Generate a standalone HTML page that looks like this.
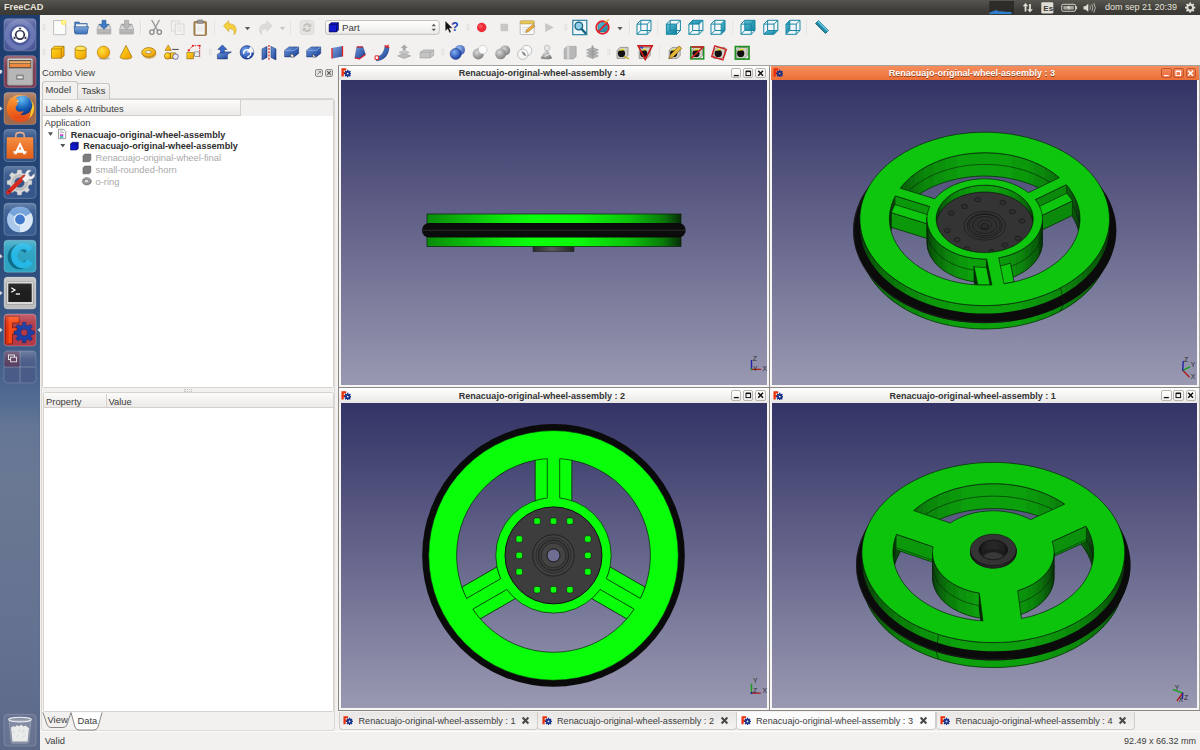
<!DOCTYPE html>
<html><head><meta charset="utf-8"><title>FreeCAD</title>
<style>
*{box-sizing:border-box;margin:0;padding:0}
html,body{width:1200px;height:750px;overflow:hidden;background:#f2f1f0;font-family:"Liberation Sans",sans-serif;font-size:11px;color:#3c3c3c}
.abs{position:absolute}
#top{left:0;top:0;width:1200px;height:14.8px;z-index:5;background:linear-gradient(#57554f,#403f3a 60%,#3a3935);color:#dfdbd2;}
#top .t{position:absolute;left:4px;top:0;font-weight:bold;font-size:9.200px;line-height:14.500px;color:#e8e4dc}
#launcher{left:0;top:14px;width:40px;height:736px;background:linear-gradient(#35527f 0%,#3f5a86 30%,#536a8f 50%,#6a7b99 70%,#67768f 100%);border-right:1px solid #2b4570}
.tile{position:absolute;left:5px;width:32px;height:32px;border-radius:4px;border:1px solid rgba(255,255,255,.25)}
#app{left:40px;top:14px;width:1160px;height:736px;background:#f2f1f0}
.txt{position:absolute;white-space:nowrap;line-height:14px}
.vp{position:absolute;background:linear-gradient(#333366,#9999b2)}
.sw{position:absolute;border:1px solid #8d8a86;background:#fbfbfa}
.tb{position:absolute;left:1px;right:1px;top:1px;height:14px;background:linear-gradient(#ffffff,#e9e8e6)}
.tb.act{background:linear-gradient(#f58d5c,#ec6f36)}
.tb .ttl{position:absolute;left:0;right:0;top:0;text-align:center;font-weight:bold;font-size:11px;line-height:14px;color:#3c3c3c}
.tb.act .ttl{color:#fff;text-shadow:0 1px 0 rgba(0,0,0,.35)}

.t9{font-size:9.4px}
.b9{font-size:9.1px;font-weight:bold;color:#2e2e2e}
.gry{color:#a9a9a9}
#dock{left:41px;top:98px;width:293.5px;height:633px;border:1px solid #dcd9d5;border-radius:3px;background:#f2f1f0}
.tab{position:absolute;border:1px solid #c9c6c2;border-bottom:none;border-radius:3px 3px 0 0;background:linear-gradient(#f6f5f4,#e6e4e1)}
.tab.sel{background:#f2f1f0}
.white{position:absolute;background:#fff;border:1px solid #d6d3cf;border-radius:1.5px}
.hdr{position:absolute;background:linear-gradient(#fbfbfa,#eceae8);border-bottom:1px solid #d3d0cc}

#mdi{left:338px;top:65px;width:862px;height:646px;background:#f7f6f5}
.ln{position:absolute;background:#8a8885}
.wb{position:absolute;width:10.5px;height:10.5px;border:1px solid #b9b6b2;border-radius:2px;background:linear-gradient(#fff,#f1f0ee)}
.act .wb{border-color:#c2562a;background:linear-gradient(#f4885a,#e96a38)}
.mtab{position:absolute;top:712px;height:17.5px;width:199.5px;border:1px solid #d0cdc9;border-top:none;border-radius:0 0 4px 4px;background:linear-gradient(#e9e7e5,#f4f3f2)}
.mtab.sel{background:#fbfbfb}
.mtab .x{position:absolute;left:181.5px;top:4px}
</style></head><body>
<div id="top" class="abs"><span class="t">FreeCAD</span><svg class="abs" style="left:980px;top:0" width="220" height="15" viewBox="980 0 220 15"><rect x="989.300" y="1" width="24.700" height="13" fill="#2d2c29"/><path d="M989.300 14v-1.500l2-.5l1.500-1l1 .8l1.500-2.300l1 1.500l1.200-1l1 1.800l1.500-.8l1 .5l2-.3l1.500.6l2 .2l2.500-.3l2.500.5v1.800z" fill="#2d7fd0"/><path d="M1025.500 3l2.800 3.300h-1.900v5.200h-1.800v-5.200h-1.900zM1030 12.500l-2.800-3.300h1.900v-5.200h1.800v5.200h1.900z" fill="#e0ddd6"/><rect x="1041.300" y="2.300" width="12" height="11.200" rx="1.200" fill="#e0ddd6"/><text x="1043.300" y="11" font-family="Liberation Sans,sans-serif" font-size="8" font-weight="bold" fill="#3c3b37">Es</text><rect x="1061.700" y="4.300" width="13.800" height="7" rx="1.500" fill="none" stroke="#cfccc5" stroke-width="1"/><rect x="1075.800" y="6.300" width="1.300" height="3" fill="#cfccc5"/><rect x="1063.400" y="6" width="10.400" height="3.600" fill="#a5a29c"/><path d="M1069.500 5.300l-2.300 2.800h1.800l-1 2.400l2.600-3h-1.800z" fill="#f2efe8"/><path d="M1083.500 6.200h2l2.800-2.600v8.400l-2.800-2.600h-2z" fill="#e0ddd6"/><path d="M1089.800 5.500q1.300 2.300 0 4.600M1091.800 4.200q2.200 3.600 0 7.200M1093.800 3q3 4.800 0 9.600" fill="none" stroke="#cfccc5" stroke-width=".8"/><path d="M1195.34 6.79L1195.34 8.41L1193.98 8.57L1193.56 9.59L1194.41 10.66L1193.26 11.81L1192.19 10.96L1191.17 11.38L1191.01 12.74L1189.39 12.74L1189.23 11.38L1188.21 10.96L1187.14 11.81L1185.99 10.66L1186.84 9.59L1186.42 8.57L1185.06 8.41L1185.06 6.79L1186.42 6.63L1186.84 5.61L1185.99 4.54L1187.14 3.39L1188.21 4.24L1189.23 3.82L1189.39 2.46L1191.01 2.46L1191.17 3.82L1192.19 4.24L1193.26 3.39L1194.41 4.54L1193.56 5.61L1193.98 6.63zM1192.10 7.60a1.9 1.9 0 1 0 -3.8 0a1.9 1.9 0 1 0 3.8 0z" fill="#e0ddd6" fill-rule="evenodd"/></svg><span class="abs" style="left:1105px;top:0;font-size:9.000px;line-height:15px;color:#e6e2da;white-space:nowrap">dom sep 21 20:39</span></div>
<svg class="abs" style="left:0;top:14px" width="41" height="736" viewBox="0 14 41 736"><defs><linearGradient id="lbg" x1="0" x2="0" y1="0" y2="1"><stop offset="0" stop-color="#1d3d70"/><stop offset=".16" stop-color="#224274"/><stop offset=".32" stop-color="#2a4a79"/><stop offset=".44" stop-color="#3b5985"/><stop offset=".52" stop-color="#506a91"/><stop offset=".56" stop-color="#647695"/><stop offset=".64" stop-color="#6a7893"/><stop offset=".85" stop-color="#647190"/><stop offset="1" stop-color="#5b6887"/></linearGradient><linearGradient id="tg" x1="0" x2="0" y1="0" y2="1"><stop offset="0" stop-color="#fff" stop-opacity=".22"/><stop offset=".5" stop-color="#fff" stop-opacity=".05"/><stop offset="1" stop-color="#fff" stop-opacity="0"/></linearGradient><radialGradient id="ffg" cx=".45" cy=".2" r=".85"><stop offset="0" stop-color="#58b8f4"/><stop offset=".55" stop-color="#1560b8"/><stop offset="1" stop-color="#0a2a78"/></radialGradient><linearGradient id="fxo" x1="0" x2="0" y1="0" y2="1"><stop offset="0" stop-color="#f59a30"/><stop offset=".6" stop-color="#f0701c"/><stop offset="1" stop-color="#e2481a"/></linearGradient><linearGradient id="og" x1="0" x2="0" y1="0" y2="1"><stop offset="0" stop-color="#f58a3c"/><stop offset="1" stop-color="#e0601a"/></linearGradient></defs><rect x="0" y="14" width="40.3" height="736" fill="url(#lbg)"/><rect x="39.6" y="14" width="1" height="736" fill="#4f6b99" opacity=".8"/><rect x="4" y="18.8" width="32" height="32" rx="3.5" fill="#4c5a9c" stroke="rgba(255,255,255,.28)" stroke-width=".8"/><circle cx="20" cy="34.8" r="13" fill="none" stroke="#8f9bd0" stroke-width="5" opacity=".45"/><circle cx="20" cy="34.8" r="8.2" fill="#fff"/><circle cx="20" cy="34.8" r="4.3" fill="none" stroke="#2b2b4a" stroke-width="1.7"/><circle cx="20.0" cy="28.6" r="1.35" fill="#2b2b4a" stroke="#fff" stroke-width=".5"/><circle cx="14.6" cy="37.9" r="1.35" fill="#2b2b4a" stroke="#fff" stroke-width=".5"/><circle cx="25.4" cy="37.9" r="1.35" fill="#2b2b4a" stroke="#fff" stroke-width=".5"/><rect x="4" y="55.7" width="32" height="32" rx="3.5" fill="#7e3a50" stroke="rgba(255,255,255,.28)" stroke-width=".8"/><rect x="7.300" y="58.300" width="25.500" height="27" rx="1.800" fill="#c6c6c6" stroke="#777" stroke-width=".6"/><rect x="8.800" y="60" width="22.500" height="8.500" fill="#4a3c36"/><rect x="9.500" y="61.200" width="21" height="2.200" fill="#f3a556"/><rect x="9.500" y="64" width="21" height="3.200" fill="#e8853a"/><rect x="7.800" y="68.500" width="24.500" height="16.500" rx="1" fill="#b6b6b6" stroke="#8a8a8a" stroke-width=".5"/><rect x="16" y="74.500" width="8" height="5.500" rx="1" fill="#8a8a8a"/><rect x="17.500" y="76.300" width="5" height="1.900" fill="#ececec"/><rect x="4" y="92.6" width="32" height="32" rx="3.5" fill="#a0694a" stroke="rgba(255,255,255,.28)" stroke-width=".8"/><circle cx="20.3" cy="108.4" r="13.6" fill="url(#fxo)"/><path d="M30.500 99.500a13.600 13.600 0 0 1 2.800 13q-1.500 4-4.500 6q3-5 2-10.500q-.8-4.500-3.300-7z" fill="#fbd02c"/><circle cx="22.400" cy="105.300" r="9.900" fill="url(#ffg)"/><path d="M9.500 99q1.500-1.500 3-1q1.500-2 4-2.500q-1 1.500-.500 3q1.500.500 3 2.200l-2.500 1.200l1.800 1.800q-2 1.200-2.600 3.200q-.700 2.400 1.500 4q2.500 1.600 6.500 0q-.500 2.500-3.500 3.500q5 2 9-1.500q-3 6-10 5.500q-7-.500-10-7q-2.500-6 .300-12.400z" fill="url(#fxo)"/><path d="M16.500 102.500l2.500-1.200l-1.400-.9z" fill="#fff0e0"/><rect x="4" y="129.5" width="32" height="32" rx="3.5" fill="#2f5288" stroke="rgba(255,255,255,.28)" stroke-width=".8"/><path d="M15.800 138v-2.800q0-2.700 4.200-2.700t4.200 2.700v2.800" fill="none" stroke="#f3a67a" stroke-width="1.400"/><path d="M6.800 137.300h26.400l.3 21.400h-27z" fill="url(#og)"/><path d="M20 142l6 12.300h-2.700l-1.100-2.500h-4.400l-1.100 2.500h-2.700zM20 146.200l-1.300 3.400h2.600zM13.300 151.300h13.400v1.500h-13.400z" fill="#fff"/><rect x="4" y="166.4" width="32" height="32" rx="3.5" fill="#35578c" stroke="rgba(255,255,255,.28)" stroke-width=".8"/><path d="M31.94 180.53L31.94 184.47L28.99 184.94L27.94 187.49L29.69 189.91L26.91 192.69L24.49 190.94L21.94 191.99L21.47 194.94L17.53 194.94L17.06 191.99L14.51 190.94L12.09 192.69L9.31 189.91L11.06 187.49L10.01 184.94L7.06 184.47L7.06 180.53L10.01 180.06L11.06 177.51L9.31 175.09L12.09 172.31L14.51 174.06L17.06 173.01L17.53 170.06L21.47 170.06L21.94 173.01L24.49 174.06L26.91 172.31L29.69 175.09L27.94 177.51L28.99 180.06zM24.70 182.50a5.2 5.2 0 1 0 -10.4 0a5.2 5.2 0 1 0 10.4 0z" fill="#d9d9d9" fill-rule="evenodd" stroke="#aaa" stroke-width=".4"/><circle cx="19.500" cy="182.500" r="7.200" fill="none" stroke="#bcbcbc" stroke-width="2.200"/><path d="M8 192.500l16-15.500" stroke="#d62a20" stroke-width="4.200" stroke-linecap="round"/><path d="M23.500 177.500l3.500-3.300a4.300 4.300 0 0 1 5.700-5.300l-3 2.900l.6 2.600l2.600.5l2.900-3a4.300 4.300 0 0 1-5.400 5.800l-3.300 3.400z" fill="#f2f2f2" stroke="#bbb" stroke-width=".4" transform="translate(-1.500 1.500)"/><circle cx="9.300" cy="191.300" r=".9" fill="#7a1010"/><rect x="4" y="203.3" width="32" height="32" rx="3.5" fill="#3a5d92" stroke="rgba(255,255,255,.28)" stroke-width=".8"/><circle cx="20" cy="219.500" r="12.800" fill="#8fb6e4"/><path d="M20 219.500L8.900 213.100A12.800 12.800 0 0 1 31.100 213.100z" fill="#6f9fd8"/><path d="M20 219.500L31.100 213.100A12.800 12.800 0 0 1 20 232.300z" fill="#dbe8f7"/><path d="M20 219.500L20 232.300A12.800 12.800 0 0 1 8.900 213.100z" fill="#a9c8ec"/><circle cx="20" cy="219.500" r="6.300" fill="#e8f0fa"/><circle cx="20" cy="219.500" r="4.900" fill="#3f78cc"/><rect x="4" y="240.2" width="32" height="32" rx="3.5" fill="#2fa3c2" stroke="rgba(255,255,255,.28)" stroke-width=".8"/><path d="M31.500 248.500a12 12.500 0 1 0 0 15.500l-4.500-4a6 6.500 0 1 1 0-7.500z" fill="#0e6f8c" transform="translate(-2.500 0.600)"/><path d="M32.500 248a12 12.500 0 1 0 0 15.500l-4.500-4a6 6.500 0 1 1 0-7.500z" fill="#25b8e6"/><rect x="4" y="277.1" width="32" height="32" rx="3.5" fill="#bdbdbd" stroke="rgba(255,255,255,.28)" stroke-width=".8"/><rect x="6.500" y="281.500" width="27" height="23" rx="1.500" fill="#d9d9d9" stroke="#8e8e8e" stroke-width=".6"/><rect x="8.300" y="283.500" width="23.400" height="18.500" fill="#1e1e1e"/><path d="M11.300 287.800l3.600 2.200l-3.600 2.200" fill="none" stroke="#fff" stroke-width="1.300"/><path d="M15.800 294h4.200" stroke="#fff" stroke-width="1.300"/><rect x="4" y="314.0" width="32" height="32" rx="3.5" fill="#b23a48" stroke="rgba(255,255,255,.28)" stroke-width=".8"/><path d="M5.600 316.300h13.600v6.600h-6.800v4.800h4.800v6.200h-4.800v10h-6.800z" fill="#ff4a14" stroke="#6a1208" stroke-width=".7"/><path d="M6 316.700h2.600v26.800h-2.600z" fill="#d82808" opacity=".7"/><path d="M34.37 330.99L34.37 334.21L31.56 334.49L30.74 336.47L32.53 338.65L30.25 340.93L28.07 339.14L26.09 339.96L25.81 342.77L22.59 342.77L22.31 339.96L20.33 339.14L18.15 340.93L15.87 338.65L17.66 336.47L16.84 334.49L14.03 334.21L14.03 330.99L16.84 330.71L17.66 328.73L15.87 326.55L18.15 324.27L20.33 326.06L22.31 325.24L22.59 322.43L25.81 322.43L26.09 325.24L28.07 326.06L30.25 324.27L32.53 326.55L30.74 328.73L31.56 330.71zM27.70 332.60a3.5 3.5 0 1 0 -7.0 0a3.5 3.5 0 1 0 7.0 0z" fill="#1c3fa8" fill-rule="evenodd" stroke="#0e2266" stroke-width=".5"/><rect x="4" y="350.9" width="32" height="32" rx="3.5" fill="#4a5a86" stroke="rgba(255,255,255,.28)" stroke-width=".8" opacity=".75"/><rect x="4.500" y="351.400" width="15.500" height="15.500" rx="2" fill="#5b3a5c" opacity=".85"/><path d="M20 351.500v31M4.500 367h31" stroke="rgba(255,255,255,.35)" stroke-width=".7"/><rect x="8.500" y="355" width="6" height="4.600" fill="none" stroke="#e8e8e8" stroke-width=".9"/><rect x="10.600" y="357.200" width="6" height="4.600" fill="#5b3a5c" stroke="#e8e8e8" stroke-width=".9"/><rect x="4" y="18.8" width="32" height="16" rx="3.500" fill="url(#tg)"/><rect x="4" y="55.7" width="32" height="16" rx="3.500" fill="url(#tg)"/><rect x="4" y="92.6" width="32" height="16" rx="3.500" fill="url(#tg)"/><rect x="4" y="129.5" width="32" height="16" rx="3.500" fill="url(#tg)"/><rect x="4" y="166.4" width="32" height="16" rx="3.500" fill="url(#tg)"/><rect x="4" y="203.3" width="32" height="16" rx="3.500" fill="url(#tg)"/><rect x="4" y="240.2" width="32" height="16" rx="3.500" fill="url(#tg)"/><rect x="4" y="277.1" width="32" height="16" rx="3.500" fill="url(#tg)"/><rect x="4" y="314.0" width="32" height="16" rx="3.500" fill="url(#tg)"/><rect x="4" y="350.9" width="32" height="16" rx="3.500" fill="url(#tg)"/><path d="M0 69.5l2.600 2.200l-2.600 2.200z" fill="#e8e8e8" opacity=".9"/><path d="M0 106.39999999999999l2.600 2.200l-2.600 2.200z" fill="#e8e8e8" opacity=".9"/><path d="M0 254.0l2.600 2.200l-2.600 2.200z" fill="#e8e8e8" opacity=".9"/><path d="M0 290.90000000000003l2.600 2.200l-2.600 2.200z" fill="#e8e8e8" opacity=".9"/><path d="M0 327.8l2.600 2.200l-2.600 2.200z" fill="#e8e8e8" opacity=".9"/><path d="M40 327.8l-2.600 2.200l2.600 2.200z" fill="#e8e8e8" opacity=".9"/><path d="M0 70.500h1.800M0 72.800h1.800" stroke="#e8e8e8" stroke-width=".9"/><rect x="4" y="714.300" width="32" height="31.700" rx="3.500" fill="#fff" fill-opacity=".07" stroke="rgba(255,255,255,.22)" stroke-width=".8"/><path d="M9 720.500h22l-2.300 21.500q-.2 1.200-1.500 1.200h-14.400q-1.300 0-1.500-1.200z" fill="#c4c9d4" fill-opacity=".28" stroke="#d8dbe2" stroke-opacity=".5" stroke-width=".6"/><path d="M11 727.500l2.500-1.500l1.500 1l2-2l2 1.500l2-2l2.500 2l2-1l2.500 2l1 .5l-1.500 13.500h-15z" fill="#f2f2f0" fill-opacity=".92"/><path d="M13 731l2 2M19 729l1 3M24 730l-1.500 3M16 737l2.500-2M23 737l2-1.500" stroke="#c9c9c6" stroke-width=".7"/><ellipse cx="20" cy="719.600" rx="11.300" ry="2.300" fill="#aeb4c0" fill-opacity=".55" stroke="#eceef2" stroke-width="1.100"/></svg>
<div id="app" class="abs"></div><!--TB--><svg class="abs" style="left:40px;top:14px" width="1160" height="51" viewBox="40 14 1160 51"><defs><linearGradient id="yl" x1="0" x2="1" y1="0" y2="1"><stop offset="0" stop-color="#ffdc20"/><stop offset="1" stop-color="#ee9c00"/></linearGradient><radialGradient id="ys" cx=".38" cy=".35" r=".7"><stop offset="0" stop-color="#ffe23c"/><stop offset="1" stop-color="#ee9a00"/></radialGradient><linearGradient id="bl" x1="0" x2="1" y1="0" y2="1"><stop offset="0" stop-color="#6f9be0"/><stop offset="1" stop-color="#163a90"/></linearGradient><radialGradient id="bs" cx=".38" cy=".35" r=".7"><stop offset="0" stop-color="#7fb0f5"/><stop offset="1" stop-color="#10339a"/></radialGradient><radialGradient id="gs" cx=".38" cy=".35" r=".7"><stop offset="0" stop-color="#d8d8d8"/><stop offset="1" stop-color="#7c7c7c"/></radialGradient><linearGradient id="tl" x1="0" x2="1" y1="0" y2="1"><stop offset="0" stop-color="#5cc0d8"/><stop offset="1" stop-color="#0f7f9c"/></linearGradient><linearGradient id="fd" x1="0" x2="0" y1="0" y2="1"><stop offset="0" stop-color="#7da7dc"/><stop offset="1" stop-color="#3b6fb8"/></linearGradient><linearGradient id="cb" x1="0" x2="0" y1="0" y2="1"><stop offset="0" stop-color="#ffffff"/><stop offset="1" stop-color="#ecebe9"/></linearGradient></defs><path d="M43.2 23.9v7.2M44.800000000000004 23.9v7.2" stroke="#c4c1bc" stroke-width=".7" stroke-dasharray=".8 1"/><path d="M53.6 20.5h9.5l2.6 2.6v11.6h-12.1z" fill="#fbfbfb" stroke="#a8a8a8" stroke-width=".7"/><circle cx="63.699999999999996" cy="22.3" r="2.6" fill="#ffe94a" opacity=".95"/><circle cx="63.699999999999996" cy="22.3" r="1.2" fill="#fffbd0"/><path d="M74.7 22.0h4.5l1.2 1.5h6.8v9.5h-12.5z" fill="#4f7fbf" stroke="#2c558f" stroke-width=".6"/><path d="M76.0 24.3h10.5v5h-10.500z" fill="#f4f4f4"/><path d="M73.9 26.7h14.600l-1.500 7.400h-11.700z" fill="url(#fd)" stroke="#2c558f" stroke-width=".6"/><path d="M97.2 28.7l1.500-4.500h10.600l1.500 4.500v5.300h-13.600z" fill="#d6d6d6" stroke="#8a8a8a" stroke-width=".6"/><rect x="98.2" y="29.5" width="11.6" height="3.6" rx=".6" fill="#b8b8b8" stroke="#8c8c8c" stroke-width=".4"/><path d="M102 20.3h4v4.300h2.800l-4.800 4.600l-4.800-4.600h2.800z" fill="#3f7cc6" stroke="#1d4f92" stroke-width=".5"/><path d="M119.8 28.7l1.500-4.500h10.600l1.500 4.500v5.300h-13.600z" fill="#d6d6d6" stroke="#8a8a8a" stroke-width=".6"/><rect x="120.8" y="29.5" width="11.6" height="3.6" rx=".6" fill="#b8b8b8" stroke="#8c8c8c" stroke-width=".4"/><path d="M124.6 20.3h4v4.300h2.800l-4.800 4.600l-4.800-4.600h2.800z" fill="#b9b9b9" stroke="#8a8a8a" stroke-width=".5"/><path d="M140.5 20.5v14" stroke="#d6d3cf" stroke-width=".8"/><path d="M141.3 20.5v14" stroke="#fbfbfa" stroke-width=".8"/><path d="M152.0 20.5l5.600 10M159.2 20.5l-5.600 10" stroke="#9a9a9a" stroke-width="1.500" stroke-linecap="round"/><circle cx="151.9" cy="32.1" r="2.200" fill="none" stroke="#8a8a8a" stroke-width="1.300"/><circle cx="159.29999999999998" cy="32.1" r="2.200" fill="none" stroke="#8a8a8a" stroke-width="1.300"/><rect x="171.2" y="21.0" width="8.500" height="10" fill="#f0efed" stroke="#d2d0cc" stroke-width=".7"/><rect x="175.2" y="24.0" width="8.800" height="10.500" fill="#f3f2f0" stroke="#cfcdc9" stroke-width=".7"/><path d="M176.7 27.0h5.500M176.7 29.0h5.500M176.7 31.0h5.500" stroke="#dad8d4" stroke-width=".6"/><rect x="193.89999999999998" y="21.5" width="12.600" height="14" rx="1" fill="#b08548" stroke="#7a5a28" stroke-width=".6"/><rect x="195.6" y="23.5" width="9.200" height="11" fill="#f6f6f6" stroke="#c8c8c8" stroke-width=".4"/><rect x="197.39999999999998" y="19.9" width="5.600" height="3.400" rx=".8" fill="#9a9a9a" stroke="#6a6a6a" stroke-width=".5"/><path d="M197.2 26.7h6M197.2 28.7h6M197.2 30.7h6" stroke="#cfcfcf" stroke-width=".5"/><path d="M215 20.5v14" stroke="#d6d3cf" stroke-width=".8"/><path d="M215.8 20.5v14" stroke="#fbfbfa" stroke-width=".8"/><path d="M223.5 25.7l5.200-5v3q7.500 0 7.500 6.500q0 3-2.500 4.500q.8-2 .300-3.500q-1-2.600-5.300-2.600v3z" fill="#f5cf3c" stroke="#c79a10" stroke-width=".5"/><path d="M244.9 27.0h5.2l-2.6 3.2z" fill="#5a5a5a"/><path d="M259.1 25.7l5.200-5v3q7.500 0 7.500 6.500q0 3-2.500 4.500q.8-2 .300-3.500q-1-2.600-5.300-2.600v3z" fill="#dddbd8" stroke="#cbc9c5" stroke-width=".5" transform="translate(531.2 0) scale(-1 1)"/><path d="M279.9 27.0h5.2l-2.6 3.2z" fill="#c8c6c2"/><path d="M291 20.5v14" stroke="#d6d3cf" stroke-width=".8"/><path d="M291.8 20.5v14" stroke="#fbfbfa" stroke-width=".8"/><rect x="300.2" y="20.7" width="13.600" height="13.600" rx="2" fill="#e6e5e2" stroke="#d0ceca" stroke-width=".6"/><path d="M303 27.0a4 4 0 0 1 7-2.500l1.300-1.200v4h-4l1.400-1.400a2.300 2.300 0 0 0-3.900 1.100zM311 28.3a4 4 0 0 1-7 2.500l-1.300 1.200v-4h4l-1.400 1.400a2.300 2.300 0 0 0 3.900-1.100z" fill="#c4c2be"/><rect x="325.500" y="20.500" width="113.700" height="13.800" rx="2.500" fill="url(#cb)" stroke="#b5b2ad" stroke-width=".8"/><path d="M329.200 24.600l1.800-1.900h7.400v7.300l-1.800 1.900h-7.400z" fill="#1018d0" stroke="#04063c" stroke-width=".7"/><path d="M329.200 24.600h7.400v7.300M336.600 24.600l1.800-1.900" stroke="#04063c" stroke-width=".6" fill="none"/><text x="342" y="31" font-family="Liberation Sans,sans-serif" font-size="9.600" fill="#3c3c3c">Part</text><path d="M431.700 26.300l2.100-2.500l2.100 2.500zM431.700 28.700l2.100 2.500l2.100-2.500z" fill="#5a5a5a"/><path d="M445.2 20.7v10.500l2.500-2.300l1.800 4l1.700-.8l-1.800-3.900h3.300z" fill="#111" stroke="#fff" stroke-width=".4"/><text x="451.3" y="31.3" font-family="Liberation Sans,sans-serif" font-weight="bold" font-size="12" fill="#1c3fb0">?</text><path d="M467 23.9v7.2M468.6 23.9v7.2" stroke="#c4c1bc" stroke-width=".7" stroke-dasharray=".8 1"/><circle cx="481.700" cy="27.5" r="4.700" fill="#ee2a36"/><circle cx="480.700" cy="26.3" r="2" fill="#ff6a70" opacity=".6"/><rect x="500.500" y="23.7" width="7.600" height="7.600" rx=".8" fill="#c9c7c3"/><rect x="520.2" y="21.5" width="14" height="13" rx="1" fill="#fafafa" stroke="#9a9a9a" stroke-width=".6"/><rect x="520.2" y="20.7" width="14" height="3.200" rx="1" fill="#e8c860" stroke="#a88a30" stroke-width=".5"/><path d="M522.2 27.5h7M522.2 29.7h6M522.2 31.9h4" stroke="#c8c8c8" stroke-width=".6"/><path d="M525.7 32.5l1-2.800l6.500-5.400l1.700 2l-6.500 5.400z" fill="#f0b040" stroke="#8a5a18" stroke-width=".5"/><path d="M545.200 22.9l8.500 4.600l-8.500 4.600z" fill="#c9c7c3"/><path d="M565 23.9v7.2M566.6 23.9v7.2" stroke="#c4c1bc" stroke-width=".7" stroke-dasharray=".8 1"/><rect x="572.8" y="20.3" width="14" height="14.400" fill="#eef6fa" stroke="#1a7a9a" stroke-width="1.100"/><circle cx="578.8" cy="26.0" r="3.800" fill="#8fd0e8" stroke="#0f5f80" stroke-width="1.300"/><path d="M581.5999999999999 29.0l4 4.200" stroke="#0f5f80" stroke-width="2.200" stroke-linecap="round"/><path d="M598.0 25.0l2.500-2.500h7v7l-2.500 2.500h-7z" fill="url(#tl)" stroke="#0b5f78" stroke-width=".5"/><circle cx="602.5" cy="27.5" r="6.300" fill="none" stroke="#e0202a" stroke-width="1.700"/><path d="M598.1 31.9l8.800-8.800" stroke="#e0202a" stroke-width="1.700"/><path d="M604.5 22.5l4.500-3" stroke="#e8b030" stroke-width="1.300"/><path d="M617.4 27.0h5.2l-2.6 3.2z" fill="#5a5a5a"/><path d="M629.5 20.5v14" stroke="#d6d3cf" stroke-width=".8"/><path d="M630.3 20.5v14" stroke="#fbfbfa" stroke-width=".8"/><path d="M637.0 24.1L647.2 24.1L647.2 34.3L637.0 34.3zM640.8 20.3L651.0 20.3L651.0 30.5L640.8 30.5z" fill="#f4fafc" fill-opacity=".7" stroke="none"/><path d="M637.0 24.1L647.2 24.1L647.2 34.3L637.0 34.3zM640.8 20.3L651.0 20.3L651.0 30.5L640.8 30.5zM637.0 24.1L640.8 20.3M647.2 24.1L651.0 20.3M647.2 34.3L651.0 30.5M637.0 34.3L640.8 30.5" fill="none" stroke="#1787a3" stroke-width="1"/><path d="M658.2 20.5v14" stroke="#d6d3cf" stroke-width=".8"/><path d="M659.0 20.5v14" stroke="#fbfbfa" stroke-width=".8"/><path d="M666.4 24.1L676.6 24.1L676.6 34.3L666.4 34.3zM670.2 20.3L680.4 20.3L680.4 30.5L670.2 30.5z" fill="#f4fafc" fill-opacity=".7" stroke="none"/><path d="M666.4 24.1L676.6 24.1L676.6 34.3L666.4 34.3z" fill="url(#tl)"/><path d="M666.4 24.1L676.6 24.1L676.6 34.3L666.4 34.3zM670.2 20.3L680.4 20.3L680.4 30.5L670.2 30.5zM666.4 24.1L670.2 20.3M676.6 24.1L680.4 20.3M676.6 34.3L680.4 30.5M666.4 34.3L670.2 30.5" fill="none" stroke="#1787a3" stroke-width="1"/><path d="M688.9 24.1L699.1 24.1L699.1 34.3L688.9 34.3zM692.7 20.3L702.9 20.3L702.9 30.5L692.7 30.5z" fill="#f4fafc" fill-opacity=".7" stroke="none"/><path d="M688.9 24.1L699.1 24.1L702.9 20.3L692.7 20.3z" fill="url(#tl)"/><path d="M688.9 24.1L699.1 24.1L699.1 34.3L688.9 34.3zM692.7 20.3L702.9 20.3L702.9 30.5L692.7 30.5zM688.9 24.1L692.7 20.3M699.1 24.1L702.9 20.3M699.1 34.3L702.9 30.5M688.9 34.3L692.7 30.5" fill="none" stroke="#1787a3" stroke-width="1"/><path d="M711.0 24.1L721.2 24.1L721.2 34.3L711.0 34.3zM714.8 20.3L725.0 20.3L725.0 30.5L714.8 30.5z" fill="#f4fafc" fill-opacity=".7" stroke="none"/><path d="M721.2 24.1L725.0 20.3L725.0 30.5L721.2 34.3z" fill="url(#tl)"/><path d="M711.0 24.1L721.2 24.1L721.2 34.3L711.0 34.3zM714.8 20.3L725.0 20.3L725.0 30.5L714.8 30.5zM711.0 24.1L714.8 20.3M721.2 24.1L725.0 20.3M721.2 34.3L725.0 30.5M711.0 34.3L714.8 30.5" fill="none" stroke="#1787a3" stroke-width="1"/><path d="M733.2 20.5v14" stroke="#d6d3cf" stroke-width=".8"/><path d="M734.0 20.5v14" stroke="#fbfbfa" stroke-width=".8"/><path d="M741.0 24.1L751.2 24.1L751.2 34.3L741.0 34.3zM744.8 20.3L755.0 20.3L755.0 30.5L744.8 30.5z" fill="#f4fafc" fill-opacity=".7" stroke="none"/><path d="M744.8 20.3L755.0 20.3L755.0 30.5L744.8 30.5z" fill="url(#tl)"/><path d="M741.0 24.1L751.2 24.1L751.2 34.3L741.0 34.3zM744.8 20.3L755.0 20.3L755.0 30.5L744.8 30.5zM741.0 24.1L744.8 20.3M751.2 24.1L755.0 20.3M751.2 34.3L755.0 30.5M741.0 34.3L744.8 30.5" fill="none" stroke="#1787a3" stroke-width="1"/><path d="M763.8 24.1L774.0 24.1L774.0 34.3L763.8 34.3zM767.6 20.3L777.8 20.3L777.8 30.5L767.6 30.5z" fill="#f4fafc" fill-opacity=".7" stroke="none"/><path d="M763.8 34.3L774.0 34.3L777.8 30.5L767.6 30.5z" fill="url(#tl)"/><path d="M763.8 24.1L774.0 24.1L774.0 34.3L763.8 34.3zM767.6 20.3L777.8 20.3L777.8 30.5L767.6 30.5zM763.8 24.1L767.6 20.3M774.0 24.1L777.8 20.3M774.0 34.3L777.8 30.5M763.8 34.3L767.6 30.5" fill="none" stroke="#1787a3" stroke-width="1"/><path d="M786.0 24.1L796.2 24.1L796.2 34.3L786.0 34.3zM789.8 20.3L800.0 20.3L800.0 30.5L789.8 30.5z" fill="#f4fafc" fill-opacity=".7" stroke="none"/><path d="M786.0 24.1L789.8 20.3L789.8 30.5L786.0 34.3z" fill="url(#tl)"/><path d="M786.0 24.1L796.2 24.1L796.2 34.3L786.0 34.3zM789.8 20.3L800.0 20.3L800.0 30.5L789.8 30.5zM786.0 24.1L789.8 20.3M796.2 24.1L800.0 20.3M796.2 34.3L800.0 30.5M786.0 34.3L789.8 30.5" fill="none" stroke="#1787a3" stroke-width="1"/><path d="M807 20.5v14" stroke="#d6d3cf" stroke-width=".8"/><path d="M807.8 20.5v14" stroke="#fbfbfa" stroke-width=".8"/><path d="M815.5 23.5l3-3l10 10l-3 3z" fill="#1f8aa8" stroke="#0b4a60" stroke-width=".7"/><path d="M818.5 20.5l10 10l-1.200 1.200l-10-10z" fill="#5cc4dc"/><path d="M43.2 48.8v7.2M44.800000000000004 48.8v7.2" stroke="#c4c1bc" stroke-width=".7" stroke-dasharray=".8 1"/><path d="M51.5 48.9l2.800-2.600h9.8v9.4l-2.800 2.600h-9.8z" fill="url(#yl)" stroke="#8a5a00" stroke-width=".6"/><path d="M51.5 48.9h9.8v9.4M61.3 48.9l2.800-2.600" fill="none" stroke="#8a5a00" stroke-width=".5"/><path d="M75.1 48.4v8.500a5.500 2.300 0 0 0 11 0v-8.500z" fill="url(#yl)" stroke="#8a5a00" stroke-width=".6"/><ellipse cx="80.6" cy="48.4" rx="5.500" ry="2.300" fill="#ffe45a" stroke="#8a5a00" stroke-width=".6"/><ellipse cx="104.500" cy="58.4" rx="6" ry="1.500" fill="#000" opacity=".18"/><circle cx="103.500" cy="52.4" r="6.300" fill="url(#ys)" stroke="#a06a00" stroke-width=".5"/><path d="M126 45.4l6 11.500a6 2.200 0 0 1-12 0z" fill="url(#yl)" stroke="#8a5a00" stroke-width=".6"/><ellipse cx="149.29999999999998" cy="54.199999999999996" rx="7" ry="4.800" fill="#c98400" opacity=".5"/><ellipse cx="148.7" cy="52.4" rx="7" ry="4.800" fill="url(#ys)" stroke="#8a5a00" stroke-width=".6"/><ellipse cx="148.39999999999998" cy="52.1" rx="3" ry="1.600" fill="#f2f1f0" stroke="#8a5a00" stroke-width=".6"/><path d="M168.2 44.9l3.200 5.500h-6.400z" fill="url(#yl)" stroke="#8a5a00" stroke-width=".5"/><circle cx="167.7" cy="55.9" r="3.300" fill="url(#ys)" stroke="#7a5000" stroke-width=".5"/><rect x="170.7" y="52.9" width="5" height="5.500" fill="url(#yl)" stroke="#7a5000" stroke-width=".5"/><circle cx="175.5" cy="56.6" r="2.800" fill="#e8e8f0" stroke="#44448a" stroke-width=".7"/><path d="M172.2 49.4h6.500" stroke="#333" stroke-width=".9"/><rect x="186.89999999999998" y="52.4" width="6.500" height="6.500" fill="url(#yl)" stroke="#7a5000" stroke-width=".5"/><path d="M188.7 50.4l4-4.500M194.7 45.6h5.500M199.7 47.4v10" stroke="#e02020" stroke-width="1" stroke-dasharray="1.600 1"/><rect x="194.7" y="51.9" width="4.500" height="4.500" fill="#eee" stroke="#666" stroke-width=".6"/><circle cx="188.7" cy="50.4" r="1.100" fill="#e02020"/><circle cx="192.89999999999998" cy="45.8" r="1.100" fill="#e02020"/><circle cx="199.7" cy="45.8" r="1.100" fill="#e02020"/><path d="M209.5 48.8v7.2M211.1 48.8v7.2" stroke="#c4c1bc" stroke-width=".7" stroke-dasharray=".8 1"/><path d="M217.4 54.4l4-2.500h10l-4 2.500v4.500h-10z" fill="url(#bl)" stroke="#0e2466" stroke-width=".5"/><path d="M222.4 44.9l4.500 4.500h-2.600v3.500h-3.800v-3.500h-2.600z" fill="#3a68c8" stroke="#0e2466" stroke-width=".5"/><circle cx="246.9" cy="52.4" r="6.800" fill="url(#bs)" stroke="#0e2466" stroke-width=".5"/><path d="M246.9 52.4l6.800 0a6.800 6.800 0 0 0-3.400-5.900z" fill="#f2f1f0"/><path d="M243.70000000000002 53.9a3.500 3.500 0 1 1 4.500 2.800" fill="none" stroke="#fff" stroke-width="1.400"/><path d="M249.5 58.0l-2.800-.3l1.400-2.300z" fill="#fff"/><path d="M262 48.9l5-2.500v11l-5 2.500z" fill="url(#bl)" stroke="#0e2466" stroke-width=".5"/><path d="M276 48.9l-5-2.500v11l5 2.500z" fill="url(#bl)" stroke="#0e2466" stroke-width=".5"/><path d="M269 44.9v15" stroke="#e02020" stroke-width="1.200" stroke-dasharray="2 1.200"/><path d="M284.6 50.4l4.500-3.500h9.500v6.500l-4.500 3.500h-9.500z" fill="url(#bl)" stroke="#0e2466" stroke-width=".5"/><path d="M284.6 50.4h9.500l4.500-3.500" fill="none" stroke="#9cc0f0" stroke-width=".6"/><path d="M290.6 53.9q3.500 0 3.500 3h-3.500z" fill="#f2f1f0" stroke="#333" stroke-width=".5"/><path d="M306.7 50.4l4.500-3.500h9.500v6.500l-4.500 3.500h-9.500z" fill="url(#bl)" stroke="#0e2466" stroke-width=".5"/><path d="M306.7 50.4h9.500l4.500-3.500" fill="none" stroke="#9cc0f0" stroke-width=".6"/><path d="M316.2 50.4l4.500-3.500v3.500l-4.500 3.500z" fill="#f2f1f0" opacity=".0"/><path d="M312.7 53.9l3.500 3h-3.500z" fill="#f2f1f0" stroke="#333" stroke-width=".5"/><path d="M332 47.9l10.500-2v10.500l-10.500 2z" fill="url(#bl)" opacity=".9"/><path d="M332 47.9v10.500M342.5 45.9v10.500" stroke="#e02020" stroke-width="1.300"/><path d="M354.9 57.9l2-11h6l2.500 7.500l-6 4.500z" fill="url(#bl)" stroke="#0e2466" stroke-width=".4"/><path d="M356.9 46.9h6" stroke="#e02020" stroke-width="1.200"/><path d="M354.9 57.9l4.500 1l6-4.500" fill="none" stroke="#e02020" stroke-width="1.200"/><path d="M376.1 56.9q8-1 9-11l4 1.500q-1 12-12.500 13.500z" fill="url(#bl)" stroke="#0e2466" stroke-width=".4"/><path d="M384.6 45.6l4.500 1.800M388.6 44.9l-2.500 3" stroke="#e02020" stroke-width="1.200"/><path d="M375.1 55.9h3.500v3.500h-3.500z" fill="#fff" stroke="#e02020" stroke-width="1"/><path d="M397.7 55.9l6.500-2.500l6.500 2.500l-6.500 2.500z" fill="#bdbdbd" stroke="#8c8c8c" stroke-width=".5"/><path d="M399.2 52.4l5-2l5 2l-5 2z" fill="#c9c9c9" stroke="#969696" stroke-width=".5"/><path d="M404.2 44.4l3.500 3.500h-2v2h-3v-2h-2z" fill="#a9a9a9"/><path d="M420.09999999999997 52.4l3.500-2.500h10v5.500l-3.500 2.500h-10z" fill="#c4c4c4" stroke="#8c8c8c" stroke-width=".5"/><path d="M420.09999999999997 52.4h10v5.500M430.09999999999997 52.4l3.500-2.500" fill="none" stroke="#9a9a9a" stroke-width=".5"/><path d="M442 48.8v7.2M443.6 48.8v7.2" stroke="#c4c1bc" stroke-width=".7" stroke-dasharray=".8 1"/><circle cx="460.0" cy="49.9" r="5" fill="url(#bs)" opacity=".8"/><circle cx="455.7" cy="53.9" r="5.600" fill="url(#bs)" stroke="#0e2466" stroke-width=".4"/><circle cx="478.2" cy="53.9" r="5.600" fill="url(#gs)"/><circle cx="482.8" cy="49.6" r="4.300" fill="#fbfbfb" stroke="#b0b0b0" stroke-width=".5"/><circle cx="505.1" cy="50.4" r="5" fill="url(#gs)"/><circle cx="500.6" cy="53.9" r="5.400" fill="url(#gs)"/><circle cx="526.5999999999999" cy="50.6" r="5.200" fill="#fafafa" stroke="#9a9a9a" stroke-width=".6"/><circle cx="522.8" cy="54.199999999999996" r="5.200" fill="#fafafa" fill-opacity=".6" stroke="#9a9a9a" stroke-width=".6"/><path d="M522.0 51.199999999999996a5.200 5.200 0 0 1 4 4.800a5.200 5.200 0 0 1-4-4.800z" fill="#8c8c8c"/><path d="M546.6 48.4l5.500 9.500a6 2 0 0 1-11.500 0z" fill="url(#gs)"/><circle cx="547.1" cy="47.9" r="2.800" fill="#e6e6e6" stroke="#a0a0a0" stroke-width=".5"/><path d="M544.6 56.4l7-3" stroke="#fff" stroke-width=".800"/><path d="M564.2 48.9l3-2.500h9v10l-3 2.500h-9z" fill="#b8b8b8" stroke="#8a8a8a" stroke-width=".5"/><path d="M568.2 45.4v14" stroke="#d8d8d8" stroke-width="2.200"/><path d="M586.5 49.9l6-2.500l6 2.500l-6 2.500zM586.5 52.9l6-2.500l6 2.500l-6 2.500zM586.5 55.9l6-2.500l6 2.500l-6 2.500z" fill="#b4b4b4" stroke="#8a8a8a" stroke-width=".5"/><path d="M592.5 45.4v13" stroke="#9a9a9a" stroke-width="1.600"/><path d="M608 48.8v7.2M609.6 48.8v7.2" stroke="#c4c1bc" stroke-width=".7" stroke-dasharray=".8 1"/><path d="M617 50.4l3-3h8v8l-3 3h-8z" fill="#d0d0c8" stroke="#555" stroke-width=".5"/><circle cx="621.5" cy="53.4" r="3.600" fill="#111"/><path d="M618.5 50.9l4-2.500l2.500 1.500z" fill="#f0e020"/><path d="M624 56.4l5 2.500" stroke="#c8b020" stroke-width="1.200"/><path d="M639.2 50.4l3-3h8v8l-3 3h-8z" fill="#d0d0c8" stroke="#555" stroke-width=".5"/><circle cx="643.7" cy="53.4" r="3.600" fill="#111"/><path d="M640.7 50.9l4-2.500l2.500 1.500z" fill="#f0e020"/><path d="M638.2 45.9h14l-7 13.500z" fill="none" stroke="#c81818" stroke-width="1.600"/><path d="M640.2 46.9l3 1" stroke="#2040c0" stroke-width="1.600"/><path d="M660 45.4v14" stroke="#d6d3cf" stroke-width=".8"/><path d="M660.8 45.4v14" stroke="#fbfbfa" stroke-width=".8"/><path d="M669.2 50.4l3-3h8v8l-3 3h-8z" fill="#d0d0c8" stroke="#555" stroke-width=".5"/><circle cx="673.7" cy="53.4" r="3.600" fill="#111"/><path d="M670.7 50.9l4-2.500l2.500 1.500z" fill="#f0e020"/><path d="M668.7 58.9l2-4.500l8.500-8.500l2.500 2.500l-8.500 8.500z" fill="#e8b838" stroke="#6a4a10" stroke-width=".6"/><path d="M691.5 50.4l3-3h8v8l-3 3h-8z" fill="#d0d0c8" stroke="#555" stroke-width=".5"/><circle cx="696.0" cy="53.4" r="3.600" fill="#111"/><path d="M693.0 50.9l4-2.500l2.500 1.500z" fill="#f0e020"/><rect x="690.7" y="46.9" width="13" height="12" fill="none" stroke="#209020" stroke-width="1.500"/><path d="M691.5 57.9l12-11" stroke="#d02020" stroke-width="1.500"/><path d="M691.5 46.9l12 0" stroke="#d02020" stroke-width="1.500"/><path d="M713.8 50.4l3-3h8v8l-3 3h-8z" fill="#d0d0c8" stroke="#555" stroke-width=".5"/><circle cx="718.3" cy="53.4" r="3.600" fill="#111"/><path d="M715.3 50.9l4-2.500l2.500 1.500z" fill="#f0e020"/><path d="M714.8 45.9l11.500 3.500l-3.500 10.500l-11-3.500z" fill="none" stroke="#d02020" stroke-width="1.500"/><path d="M736.2 50.4l3-3h8v8l-3 3h-8z" fill="#d0d0c8" stroke="#555" stroke-width=".5"/><circle cx="740.7" cy="53.4" r="3.600" fill="#111"/><path d="M737.7 50.9l4-2.500l2.500 1.500z" fill="#f0e020"/><rect x="735.4000000000001" y="46.6" width="13.600" height="12.500" fill="none" stroke="#209020" stroke-width="1.700"/></svg><!--/TB-->

<div class="txt t9" style="left:42px;top:65.5px">Combo View</div>
<svg class="abs" style="left:314.800px;top:68.800px" width="20" height="10" viewBox="0 0 20 10"><rect x=".5" y=".5" width="7" height="7" rx="1.5" fill="#e4e2df" stroke="#8f8d89"/><path d="M2.3 5.7L5.7 2.3M3.6 2.3h2.1v2.1" stroke="#777" stroke-width=".8" fill="none"/><rect x="10.5" y=".5" width="7" height="7" rx="1.5" fill="#e4e2df" stroke="#8f8d89"/><path d="M12.2 2.2l3.6 3.6M15.8 2.2l-3.6 3.6" stroke="#555" stroke-width="1.1"/></svg>
<div id="dock" class="abs"></div>
<div class="tab" style="left:77px;top:82.5px;width:32.5px;height:16px"></div>
<div class="tab sel" style="left:41.5px;top:80.5px;width:36px;height:19px"></div>
<div class="txt t9" style="left:45.5px;top:83px">Model</div>
<div class="txt t9" style="left:81.5px;top:84px">Tasks</div>
<div class="white" style="left:42px;top:99px;width:292px;height:288.5px"></div>
<div class="hdr" style="left:43px;top:100px;width:197.5px;height:16px;border-right:1px solid #d3d0cc"></div>
<div class="abs" style="left:241px;top:100px;width:92px;height:15.500px;background:#f2f1f0"></div>
<div class="txt t9" style="left:45.5px;top:101.5px">Labels &amp; Attributes</div>
<div class="txt t9" style="left:44.5px;top:115.7px">Application</div>
<div class="txt b9" style="left:70.7px;top:127.6px">Renacuajo-original-wheel-assembly</div>
<div class="txt b9" style="left:83.2px;top:139.4px">Renacuajo-original-wheel-assembly</div>
<div class="txt t9 gry" style="left:95.5px;top:151px;letter-spacing:-.02px">Renacuajo-original-wheel-final</div>
<div class="txt t9 gry" style="left:95.5px;top:163px">small-rounded-horn</div>
<div class="txt t9 gry" style="left:95.5px;top:175px">o-ring</div>
<svg class="abs" style="left:42px;top:126px" width="60" height="62" viewBox="42 126 60 62">
<path d="M48 132.3h5l-2.5 3.6z" fill="#555"/><path d="M60.3 144h5l-2.5 3.6z" fill="#555"/>
<path d="M58.5 129.3h5l2.2 2.2v7.2h-7.2z" fill="#fafafa" stroke="#777" stroke-width=".7"/><rect x="60" y="134.2" width="3.3" height="2" fill="#d24ad2"/><rect x="60" y="136.2" width="3.3" height="1.6" fill="#24b6b6"/><path d="M60 131h3M60 132.5h4" stroke="#999" stroke-width=".6"/>
<path d="M70.5 144l1.6-1.7h6.2v6l-1.6 1.7h-6.2z" fill="#1018c8" stroke="#05085a" stroke-width=".6"/><path d="M70.5 144h6.2v6M76.7 144l1.6-1.7" stroke="#05085a" stroke-width=".5" fill="none"/>
<path d="M83 155.8l1.6-1.7h6.2v6l-1.6 1.7H83z" fill="#7c7c7c" stroke="#5a5a5a" stroke-width=".6"/>
<path d="M83 167.8l1.6-1.7h6.2v6l-1.6 1.7H83z" fill="#7c7c7c" stroke="#5a5a5a" stroke-width=".6"/>
<ellipse cx="86.800" cy="181.300" rx="4.600" ry="3.700" fill="#858585" stroke="#6c6c6c" stroke-width=".5"/><ellipse cx="86.200" cy="180.500" rx="3.600" ry="2.600" fill="none" stroke="#b4b4b4" stroke-width=".9"/><ellipse cx="86.500" cy="181" rx="1.900" ry="1.200" fill="#dcdcdc"/>
</svg>
<div class="abs" style="left:184px;top:388.5px;width:8px;height:3px;border-top:1px dotted #c4c2be;border-bottom:1px dotted #c4c2be"></div>
<div class="white" style="left:43px;top:391.5px;width:291px;height:320px"></div>
<div class="hdr" style="left:44px;top:392.5px;width:289px;height:15.7px"></div>
<div class="abs" style="left:105.500px;top:394px;width:1px;height:13px;background:#d5d2ce"></div>
<div class="txt t9" style="left:46px;top:394.5px">Property</div>
<div class="txt t9" style="left:108.5px;top:394.5px">Value</div>
<svg class="abs" style="left:41px;top:711px" width="70" height="20" viewBox="41 711 70 20"><path d="M43 712.5l4 12q1 3 4 3h12q3 0 4-3l4-12" fill="#f2f1f0" stroke="#7d7b78" stroke-width=".9"/><path d="M71 712.5l4 14.5q1 3 4 3h15q3 0 4-3l4-14.5" fill="#fff" stroke="#7d7b78" stroke-width=".9"/></svg>
<div class="txt t9" style="left:47.5px;top:713px">View</div>
<div class="txt t9" style="left:77.5px;top:714px">Data</div>
<div class="txt t9" style="left:44.8px;top:733.5px">Valid</div>
<div class="txt t9" style="right:4px;top:734px;font-size:9px">92.49 x 66.32 mm</div>

<div id="mdi" class="abs"></div><div class="ln" style="left:338px;top:65px;width:1px;height:646px"></div><div class="ln" style="left:769px;top:65px;width:1.2px;height:646px"></div><div class="ln" style="left:1199.3px;top:65px;width:1px;height:646px;background:#aaa"></div><div class="ln" style="left:338px;top:65px;width:862px;height:1px;background:#a5a3a0"></div><div class="ln" style="left:338px;top:386.8px;width:862px;height:1.2px"></div><div class="ln" style="left:338px;top:709.6px;width:862px;height:1.2px"></div><div class="tb" style="left:339px;top:66px;width:429.5px;height:14px;right:auto"><div class="txt" style="left:119.80000000000001px;top:0;font-weight:bold;font-size:9.03px;line-height:14px;color:#333;">Renacuajo-original-wheel-assembly : 4</div><div class="wb" style="left:391.7px;top:1.95px"></div><div class="wb" style="left:403.8px;top:1.95px"></div><div class="wb" style="left:416.2px;top:1.95px"></div><svg class="abs" style="left:391.7px;top:1.95px" width="36" height="11" viewBox="0 0 36 11"><path d="M2.8 7.6h5" stroke="#111" stroke-width="1.3"/><rect x="15" y="3.2" width="4.6" height="4.4" fill="none" stroke="#111" stroke-width="1"/><path d="M15 3.4h4.6" stroke="#111" stroke-width="1.4"/><path d="M27.2 2.8l4.8 5M32 2.8l-4.8 5" stroke="#111" stroke-width="1.5"/></svg></div><svg class="abs" style="left:341px;top:68px" width="10.45" height="9.5" viewBox="0 0 11 10"><path d="M.5 .3h5v2.200H2.900v1.600h1.700v2H2.900v2.800H.5z" fill="#e8300a"/><path d="M11.04 5.21L11.04 6.59L9.91 6.62L9.60 7.38L10.37 8.20L9.40 9.17L8.58 8.40L7.82 8.71L7.79 9.84L6.41 9.84L6.38 8.71L5.62 8.40L4.80 9.17L3.83 8.20L4.60 7.38L4.29 6.62L3.16 6.59L3.16 5.21L4.29 5.18L4.60 4.42L3.83 3.60L4.80 2.63L5.62 3.40L6.38 3.09L6.41 1.96L7.79 1.96L7.82 3.09L8.58 3.40L9.40 2.63L10.37 3.60L9.60 4.42L9.91 5.18zM8.10 5.90a1.0 1.0 0 1 0 -2.0 0a1.0 1.0 0 1 0 2.0 0z" fill="#14308a" fill-rule="evenodd"/></svg><div class="tb act" style="left:770.5px;top:65.5px;width:428.5px;height:14.5px;right:auto"><div class="txt" style="left:118.29999999999995px;top:0;font-weight:bold;font-size:9.03px;line-height:14.5px;color:#fff;text-shadow:0 .6px .5px rgba(90,30,0,.7)">Renacuajo-original-wheel-assembly : 3</div><div class="wb" style="left:390.7px;top:2.2px"></div><div class="wb" style="left:402.8px;top:2.2px"></div><div class="wb" style="left:415.2px;top:2.2px"></div><svg class="abs" style="left:390.7px;top:2.2px" width="36" height="11" viewBox="0 0 36 11"><path d="M2.8 7.6h5" stroke="#fff" stroke-width="1.3"/><rect x="15" y="3.2" width="4.6" height="4.4" fill="none" stroke="#fff" stroke-width="1"/><path d="M15 3.4h4.6" stroke="#fff" stroke-width="1.4"/><path d="M27.2 2.8l4.8 5M32 2.8l-4.8 5" stroke="#fff" stroke-width="1.5"/></svg></div><svg class="abs" style="left:772.5px;top:67.5px" width="10.45" height="9.5" viewBox="0 0 11 10"><path d="M.5 .3h5v2.200H2.900v1.600h1.700v2H2.900v2.800H.5z" fill="#e8300a"/><path d="M11.04 5.21L11.04 6.59L9.91 6.62L9.60 7.38L10.37 8.20L9.40 9.17L8.58 8.40L7.82 8.71L7.79 9.84L6.41 9.84L6.38 8.71L5.62 8.40L4.80 9.17L3.83 8.20L4.60 7.38L4.29 6.62L3.16 6.59L3.16 5.21L4.29 5.18L4.60 4.42L3.83 3.60L4.80 2.63L5.62 3.40L6.38 3.09L6.41 1.96L7.79 1.96L7.82 3.09L8.58 3.40L9.40 2.63L10.37 3.60L9.60 4.42L9.91 5.18zM8.10 5.90a1.0 1.0 0 1 0 -2.0 0a1.0 1.0 0 1 0 2.0 0z" fill="#14308a" fill-rule="evenodd"/></svg><div class="tb" style="left:339px;top:388px;width:429.5px;height:15px;right:auto"><div class="txt" style="left:119.80000000000001px;top:1px;font-weight:bold;font-size:9.03px;line-height:15px;color:#333;">Renacuajo-original-wheel-assembly : 2</div><div class="wb" style="left:391.7px;top:2.45px"></div><div class="wb" style="left:403.8px;top:2.45px"></div><div class="wb" style="left:416.2px;top:2.45px"></div><svg class="abs" style="left:391.7px;top:2.45px" width="36" height="11" viewBox="0 0 36 11"><path d="M2.8 7.6h5" stroke="#111" stroke-width="1.3"/><rect x="15" y="3.2" width="4.6" height="4.4" fill="none" stroke="#111" stroke-width="1"/><path d="M15 3.4h4.6" stroke="#111" stroke-width="1.4"/><path d="M27.2 2.8l4.8 5M32 2.8l-4.8 5" stroke="#111" stroke-width="1.5"/></svg></div><svg class="abs" style="left:341px;top:390.5px" width="10.45" height="9.5" viewBox="0 0 11 10"><path d="M.5 .3h5v2.200H2.900v1.600h1.700v2H2.900v2.800H.5z" fill="#e8300a"/><path d="M11.04 5.21L11.04 6.59L9.91 6.62L9.60 7.38L10.37 8.20L9.40 9.17L8.58 8.40L7.82 8.71L7.79 9.84L6.41 9.84L6.38 8.71L5.62 8.40L4.80 9.17L3.83 8.20L4.60 7.38L4.29 6.62L3.16 6.59L3.16 5.21L4.29 5.18L4.60 4.42L3.83 3.60L4.80 2.63L5.62 3.40L6.38 3.09L6.41 1.96L7.79 1.96L7.82 3.09L8.58 3.40L9.40 2.63L10.37 3.60L9.60 4.42L9.91 5.18zM8.10 5.90a1.0 1.0 0 1 0 -2.0 0a1.0 1.0 0 1 0 2.0 0z" fill="#14308a" fill-rule="evenodd"/></svg><div class="tb" style="left:770.5px;top:388px;width:428.5px;height:15px;right:auto"><div class="txt" style="left:119.0px;top:1px;font-weight:bold;font-size:9.03px;line-height:15px;color:#333;">Renacuajo-original-wheel-assembly : 1</div><div class="wb" style="left:390.7px;top:2.45px"></div><div class="wb" style="left:402.8px;top:2.45px"></div><div class="wb" style="left:415.2px;top:2.45px"></div><svg class="abs" style="left:390.7px;top:2.45px" width="36" height="11" viewBox="0 0 36 11"><path d="M2.8 7.6h5" stroke="#111" stroke-width="1.3"/><rect x="15" y="3.2" width="4.6" height="4.4" fill="none" stroke="#111" stroke-width="1"/><path d="M15 3.4h4.6" stroke="#111" stroke-width="1.4"/><path d="M27.2 2.8l4.8 5M32 2.8l-4.8 5" stroke="#111" stroke-width="1.5"/></svg></div><svg class="abs" style="left:772.5px;top:390.5px" width="10.45" height="9.5" viewBox="0 0 11 10"><path d="M.5 .3h5v2.200H2.900v1.600h1.700v2H2.900v2.800H.5z" fill="#e8300a"/><path d="M11.04 5.21L11.04 6.59L9.91 6.62L9.60 7.38L10.37 8.20L9.40 9.17L8.58 8.40L7.82 8.71L7.79 9.84L6.41 9.84L6.38 8.71L5.62 8.40L4.80 9.17L3.83 8.20L4.60 7.38L4.29 6.62L3.16 6.59L3.16 5.21L4.29 5.18L4.60 4.42L3.83 3.60L4.80 2.63L5.62 3.40L6.38 3.09L6.41 1.96L7.79 1.96L7.82 3.09L8.58 3.40L9.40 2.63L10.37 3.60L9.60 4.42L9.91 5.18zM8.10 5.90a1.0 1.0 0 1 0 -2.0 0a1.0 1.0 0 1 0 2.0 0z" fill="#14308a" fill-rule="evenodd"/></svg><div class="vp" id="v4" style="left:341px;top:80px;width:426px;height:305px"></div><svg class="abs" style="left:341px;top:80px" width="426" height="305" viewBox="341 80 426 305">
<defs><linearGradient id="cyl" x1="0" x2="1" y1="0" y2="0"><stop offset="0" stop-color="#0a8a0a"/><stop offset=".08" stop-color="#0ba40b"/><stop offset=".3" stop-color="#0ce60c"/><stop offset=".42" stop-color="#0cff0c"/><stop offset=".6" stop-color="#0cf80c"/><stop offset=".8" stop-color="#0bc00b"/><stop offset=".93" stop-color="#0a7a0a"/><stop offset="1" stop-color="#082c08"/></linearGradient>
<linearGradient id="hubg" x1="0" x2="1"><stop offset="0" stop-color="#2a2a2a"/><stop offset=".45" stop-color="#5a5a5a"/><stop offset="1" stop-color="#262626"/></linearGradient>
<linearGradient id="org" x1="0" x2="0" y1="0" y2="1"><stop offset="0" stop-color="#0a0a0a"/><stop offset=".44" stop-color="#0d0d0d"/><stop offset=".5" stop-color="#2c2c2c"/><stop offset=".56" stop-color="#0d0d0d"/><stop offset="1" stop-color="#0a0a0a"/></linearGradient></defs>
<rect x="533" y="246" width="41" height="5.6" fill="url(#hubg)" stroke="#1a1a1a" stroke-width=".5"/>
<rect x="427" y="214" width="254" height="32.5" fill="url(#cyl)" stroke="#0a200a" stroke-width=".7"/>
<rect x="421.9" y="222.9" width="263.8" height="14.7" rx="7.3" fill="url(#org)"/>
</svg><div class="vp" id="v3" style="left:772px;top:80px;width:425px;height:305px"></div><!--Gv3--><svg class="abs" style="left:772px;top:80px" width="425" height="305" viewBox="772 80 425 305"><path d="M1057.9 312.8L1064.7 309.1L1064.7 285.2L1057.9 288.9z" fill="#0a890a"/><path d="M1064.3 309.3L1070.8 305.3L1070.8 281.4L1064.3 285.4z" fill="#0a820a"/><path d="M1070.4 305.5L1076.5 301.2L1076.5 277.4L1070.4 281.7z" fill="#0a7a0a"/><path d="M1076.1 301.5L1081.9 296.9L1081.9 273.0L1076.1 277.7z" fill="#097309"/><path d="M1081.5 297.3L1086.8 292.4L1086.8 268.5L1081.5 273.4z" fill="#096c09"/><path d="M1091.3 287.7L1095.3 282.7L1095.3 258.7L1091.0 264.1L1086.4 268.9L1086.4 292.8z" fill="#096409"/><path d="M1094.9 283.3L1098.9 277.6L1098.9 253.5L1094.9 259.2z" fill="#085d08"/><path d="M1098.5 278.3L1102.0 272.3L1102.0 248.2L1098.5 254.1z" fill="#085508"/><path d="M1101.6 273.2L1104.6 266.9L1104.6 242.6L1101.6 248.9z" fill="#074607"/><path d="M1104.2 267.9L1106.6 261.4L1106.6 237.0L1104.2 243.5z" fill="#073f07"/><path d="M1106.2 262.4L1106.4 262.4L1108.2 255.9L1108.2 231.5L1108.0 231.5L1106.2 238.0z" fill="#073707"/><path d="M1107.8 256.8L1108.0 256.8L1109.2 250.2L1109.2 225.8L1109.0 225.8L1107.8 232.4z" fill="#063006"/><path d="M1108.8 251.2L1109.1 251.2L1109.7 244.6L1109.7 220.2L1109.3 220.2L1108.8 226.8z" fill="#062906"/><path d="M859.7 215.6L859.8 246.7L860.2 246.7L860.1 215.6z" fill="#062106"/><path d="M859.8 245.7L860.5 252.3L860.8 252.3L860.8 228.0L860.1 221.3L859.8 221.3z" fill="#062906"/><path d="M860.4 251.4L861.7 258.0L861.9 257.9L861.9 233.6L860.6 227.0L860.4 227.0z" fill="#063006"/><path d="M861.5 257.0L863.5 263.5L863.5 239.1L861.6 232.6z" fill="#073707"/><path d="M863.1 262.6L865.7 269.0L865.7 244.6L863.2 238.2z" fill="#074607"/><path d="M865.3 268.0L868.4 274.2L868.4 249.9L865.3 243.8z" fill="#084e08"/><path d="M868.0 273.4L871.6 279.3L871.6 255.1L868.0 249.3z" fill="#085508"/><path d="M871.2 278.6L875.2 284.3L875.2 260.2L871.2 254.6z" fill="#085d08"/><path d="M874.8 283.7L879.4 289.1L879.4 265.1L874.8 259.7z" fill="#096409"/><path d="M879.0 288.6L883.9 293.7L883.9 269.8L879.0 264.7z" fill="#096c09"/><path d="M888.5 297.8L894.4 302.4L894.4 278.5L888.9 274.2L883.5 269.4L883.5 293.3z" fill="#097309"/><path d="M894.0 302.1L900.2 306.3L900.2 282.5L894.0 278.2z" fill="#0a7a0a"/><path d="M899.8 306.1L906.4 310.0L906.4 286.2L899.8 282.2z" fill="#0a820a"/><path d="M912.5 313.2L919.7 316.5L919.7 292.7L912.8 289.5L906.0 285.9L906.0 309.8z" fill="#0a890a"/><path d="M919.3 316.3L926.8 319.3L926.8 295.5L919.3 292.5z" fill="#0b910b"/><path d="M933.7 321.6L941.7 323.9L949.5 325.7L949.5 301.9L941.6 300.0L934.0 297.9L926.4 295.3L926.4 319.1z" fill="#0b980b"/><path d="M1013.8 303.0L1005.8 304.1L997.7 304.9L989.6 305.3L981.4 305.4L973.3 305.0L965.2 304.3L957.2 303.3L949.1 301.8L949.1 325.6L957.4 327.1L965.4 328.1L973.5 328.8L981.6 329.2L989.4 329.1L997.5 328.7L1005.6 328.0L1013.6 326.8L1021.9 325.2L1021.9 301.5z" fill="#0ca00c"/><path d="M1029.5 323.4L1037.1 321.2L1037.1 297.4L1029.4 299.6L1021.5 301.5L1021.5 325.3z" fill="#0b980b"/><path d="M1044.3 318.7L1051.5 315.7L1051.5 291.9L1044.2 294.9L1036.7 297.5L1036.7 321.3z" fill="#0b910b"/><path d="M1051.1 315.9L1058.3 312.5L1058.3 288.7L1051.1 292.1z" fill="#0a890a"/><path d="M865.5 268.0L868.2 273.3L871.4 278.6L875.0 283.6L879.2 288.5L883.7 293.2L888.7 297.7L894.2 302.0L900.0 305.9L906.2 309.7L912.7 313.1L919.5 316.2L926.6 319.0L933.9 321.5L941.5 323.6L949.3 325.4L957.2 326.8L965.2 327.9L973.3 328.6L981.4 328.9L989.6 328.9L997.7 328.5L1005.8 327.7L1013.8 326.6L1021.7 325.1L1029.4 323.2L1036.9 321.0L1044.2 318.5L1051.3 315.6L1058.1 312.4L1064.5 308.9L1070.6 305.2L1076.3 301.1L1081.7 296.8L1086.6 292.3L1091.1 287.6L1095.1 282.6L1098.7 277.5L1101.8 272.3L1104.4 266.9L1106.4 261.4L1108.0 255.8L1109.0 250.2L1109.5 244.5L1109.5 221.2L1109.0 226.8L1108.0 232.5L1106.4 238.0L1104.4 243.5L1101.8 248.9L1098.7 254.2L1095.1 259.3L1091.1 264.2L1086.6 268.9L1081.7 273.5L1076.3 277.7L1070.6 281.8L1064.5 285.6L1058.1 289.0L1051.3 292.2L1044.2 295.1L1036.9 297.6L1029.4 299.8L1021.7 301.7L1013.8 303.2L1005.8 304.3L997.7 305.1L989.6 305.5L981.4 305.6L973.3 305.2L965.2 304.5L957.2 303.5L949.3 302.0L941.5 300.2L933.9 298.1L926.6 295.6L919.5 292.8L912.7 289.7L906.2 286.3L900.0 282.6L894.2 278.6L888.7 274.3L883.7 269.9L879.2 265.2L875.0 260.3L871.4 255.2L868.2 250.0L865.5 244.6L863.3 239.1L861.7 233.6L860.6 228.0L860.0 222.3L859.9 216.6L860.0 245.7L860.6 251.3L861.7 257.0L863.3 262.5z" fill="none" stroke="#062406" stroke-width="0.7" stroke-linejoin="round"/><path d="M1109.5 201.0L1106.7 195.6L1103.4 190.4L1099.6 185.3L1095.5 180.3L1090.8 175.6L1085.8 171.1L1080.3 166.8L1074.5 162.7L1068.3 158.9L1061.8 155.4L1055.0 152.2L1047.2 149.0L1039.9 146.4L1032.4 144.2L1024.8 142.3L1016.9 140.7L1009.0 139.5L1000.9 138.6L992.8 138.0L984.7 137.9L976.6 138.0L968.4 138.6L960.4 139.5L952.5 140.7L944.6 142.3L937.0 144.2L929.5 146.4L922.2 149.0L915.2 151.9L907.6 155.4L901.1 158.9L894.9 162.7L889.1 166.8L883.6 171.1L878.6 175.6L873.9 180.3L869.7 185.3L866.0 190.4L862.7 195.6L859.9 201.0L857.1 207.8L855.3 213.5L854.0 219.1L853.3 224.8L853.0 230.6L853.3 236.3L854.0 242.0L855.3 247.7L857.1 253.3L859.9 260.2L862.7 265.6L866.0 270.8L869.8 275.9L873.9 280.8L878.6 285.6L883.6 290.1L889.1 294.4L894.9 298.4L901.1 302.2L907.6 305.7L915.2 309.3L922.2 312.2L929.5 314.7L937.0 317.0L944.6 318.9L952.5 320.5L960.4 321.7L968.5 322.6L976.6 323.1L984.7 323.3L992.8 323.1L1000.9 322.6L1009.0 321.7L1016.9 320.5L1024.8 318.9L1032.4 317.0L1039.9 314.7L1047.2 312.2L1055.0 309.0L1061.8 305.7L1068.3 302.2L1074.5 298.4L1080.3 294.4L1085.8 290.1L1090.8 285.6L1095.5 280.8L1099.7 275.9L1103.4 270.8L1106.7 265.6L1109.5 260.2L1111.8 254.7L1114.1 247.7L1115.4 242.1L1116.1 236.3L1116.4 230.6L1116.1 224.8L1115.4 219.1L1114.1 213.4L1112.3 207.8zM860.1 228.9L860.9 223.5L862.1 218.1L863.8 212.8L866.0 207.5L868.7 202.4L871.8 197.4L875.3 192.6L879.3 187.9L883.7 183.4L888.5 179.1L893.7 175.0L899.3 171.1L905.2 167.5L911.3 164.2L917.8 161.1L924.6 158.4L931.6 155.9L938.8 153.7L946.1 151.9L953.7 150.4L961.3 149.2L969.1 148.3L976.9 147.8L984.7 147.6L992.5 147.8L1000.3 148.3L1008.1 149.2L1015.7 150.4L1023.3 151.9L1030.6 153.7L1037.8 155.9L1044.8 158.4L1051.6 161.1L1058.0 164.2L1064.2 167.5L1070.1 171.1L1075.7 175.0L1080.9 179.1L1085.7 183.4L1090.1 187.9L1094.1 192.6L1097.6 197.4L1100.7 202.4L1103.4 207.5L1105.6 212.8L1107.3 218.1L1108.5 223.5L1109.3 228.9L1109.3 230.6L1109.3 232.3L1108.5 237.7L1107.3 243.1L1105.6 248.4L1103.4 253.6L1100.7 258.8L1097.6 263.8L1094.1 268.6L1090.1 273.3L1085.7 277.8L1080.9 282.1L1075.7 286.2L1070.1 290.0L1064.2 293.7L1058.0 297.0L1051.6 300.0L1044.8 302.8L1037.8 305.3L1030.6 307.5L1023.3 309.3L1015.7 310.8L1008.1 312.0L1000.3 312.9L992.5 313.4L984.7 313.5L976.9 313.4L969.1 312.9L961.3 312.0L953.7 310.8L946.1 309.3L938.8 307.5L931.6 305.3L924.6 302.8L917.8 300.0L911.4 297.0L905.2 293.7L899.3 290.0L893.7 286.2L888.5 282.1L883.7 277.8L879.3 273.3L875.3 268.6L871.8 263.8L868.7 258.8L866.0 253.6L863.8 248.4L862.1 243.1L860.9 237.7L860.1 232.3z" fill="#0b0b0b"/><path d="M874.0 182.5L869.8 187.4L866.0 192.5L862.8 197.8L860.0 203.2L857.7 208.7L855.9 214.2L854.6 219.9L853.8 225.6L853.6 231.3L853.8 237.0L854.6 242.7L855.9 248.4L857.7 254.0L860.0 259.5L862.8 264.8L866.0 270.1L869.8 275.2L874.0 280.1L878.6 284.9L883.6 289.4L889.1 293.7L894.9 297.7L901.1 301.5L907.6 305.0L914.4 308.2L921.5 311.1L928.9 313.7L936.4 316.0L944.2 318.0L952.1 319.5L960.1 320.8L968.3 321.7L976.5 322.2L984.7 322.4L992.9 322.2L1001.1 321.7L1009.3 320.8" fill="none" stroke="#2a2a2a" stroke-width="0.6"/><path d="M1060.5 287.8L1064.3 302.9L1060.5 311.1" fill="none" stroke="#062406" stroke-width="0.7"/><path d="M1079.7 215.3L1079.7 223.3L1080.0 220.6L1079.9 216.3L1079.8 215.3z" fill="#062106"/><path d="M1079.3 211.0L1079.3 226.7L1079.6 225.0L1080.0 220.6L1079.9 216.3z" fill="#062906"/><path d="M1079.7 213.9L1079.5 212.0L1078.4 207.0L1078.4 230.7L1078.8 229.3L1079.7 224.0z" fill="#063006"/><path d="M1078.8 208.7L1078.6 207.7L1077.3 203.2L1077.2 226.9L1078.4 230.8L1078.8 229.3z" fill="#073707"/><path d="M1077.6 204.1L1075.5 198.9L1075.5 222.7L1077.6 227.8z" fill="#074607"/><path d="M1075.9 199.8L1073.5 194.8L1073.5 218.6L1075.9 223.5z" fill="#084e08"/><path d="M1073.9 195.6L1071.0 190.9L1071.0 214.6L1073.9 219.3z" fill="#085508"/><path d="M1071.4 191.5L1068.3 187.1L1068.3 210.8L1071.4 215.2z" fill="#085d08"/><path d="M1068.7 187.6L1065.1 183.4L1065.1 207.0L1068.7 211.2z" fill="#096409"/><path d="M1065.5 183.8L1061.6 179.8L1061.6 203.4L1065.5 207.4z" fill="#096c09"/><path d="M1053.6 196.8L1057.8 200.1L1062.0 203.8L1062.0 180.2L1058.0 176.6L1053.6 173.2z" fill="#097309"/><path d="M1054.0 173.5L1049.2 170.2L1049.2 193.8L1054.0 197.1z" fill="#0a7a0a"/><path d="M1049.6 170.4L1044.5 167.3L1044.5 190.9L1049.6 194.0z" fill="#0a820a"/><path d="M1034.3 186.0L1039.6 188.4L1044.9 191.2L1044.9 167.6L1039.7 164.8L1034.3 162.4z" fill="#0a890a"/><path d="M1034.7 162.5L1028.9 160.2L1028.9 183.8L1034.7 186.1z" fill="#0b910b"/><path d="M1011.6 179.0L1017.6 180.4L1023.4 182.0L1029.3 184.0L1029.3 160.4L1023.5 158.4L1017.7 156.8L1011.6 155.4z" fill="#0b980b"/><path d="M956.2 179.3L962.5 178.1L968.6 177.2L974.8 176.6L981.0 176.3L987.2 176.3L993.4 176.6L999.6 177.1L1005.7 177.9L1012.0 179.0L1012.0 155.5L1005.7 154.3L999.6 153.5L993.4 153.0L987.2 152.7L981.0 152.8L974.7 153.1L968.6 153.7L962.5 154.5L956.2 155.7z" fill="#0ca00c"/><path d="M944.6 182.4L950.6 180.7L956.6 179.2L956.6 155.6L950.5 157.1L944.6 158.8z" fill="#0b980b"/><path d="M933.6 186.6L939.3 184.3L945.0 182.3L945.0 158.7L939.2 160.7L933.6 163.0z" fill="#0b910b"/><path d="M923.6 191.7L928.8 188.9L934.0 186.4L934.0 162.8L928.7 165.3L923.6 168.1z" fill="#0a890a"/><path d="M924.0 167.9L918.9 171.0L918.9 194.6L924.0 191.5z" fill="#0a820a"/><path d="M919.3 170.8L914.5 174.1L914.5 197.7L919.3 194.4z" fill="#0a7a0a"/><path d="M914.9 173.8L910.4 177.4L910.4 201.0L914.9 197.4z" fill="#097309"/><path d="M910.8 177.1L906.7 180.9L906.7 204.5L910.8 200.7z" fill="#096c09"/><path d="M900.2 212.0L903.6 207.8L907.1 204.2L907.1 180.5L903.4 184.3L900.2 188.4z" fill="#096409"/><path d="M900.6 187.8L897.4 192.3L897.4 216.0L900.6 211.5z" fill="#085d08"/><path d="M897.8 191.7L895.1 196.4L895.1 220.1L897.8 215.4z" fill="#085508"/><path d="M895.5 195.6L893.1 200.6L893.1 224.4L895.5 219.4z" fill="#074607"/><path d="M893.5 199.7L891.5 205.0L891.5 228.6L893.5 223.5z" fill="#073f07"/><path d="M891.9 203.8L890.6 208.5L890.4 209.7L890.4 228.1L891.0 231.0L891.9 227.7z" fill="#073707"/><path d="M890.8 207.8L889.8 212.8L889.6 215.2L889.6 222.7L889.9 225.8L890.8 230.1z" fill="#063006"/><path d="M890.0 211.9L889.8 212.8L889.4 217.2L889.5 221.5L890.0 226.2z" fill="#062906"/><path d="M919.1 170.9L914.7 174.0L910.6 177.2L906.9 180.7L903.4 184.3L900.4 188.1L897.6 192.0L895.3 196.0L893.3 200.1L891.7 204.3L890.6 208.5L889.8 212.8L889.4 217.2L889.5 221.5L889.9 225.8L890.9 230.6L891.7 227.7L893.3 223.5L895.3 219.4L897.6 215.4L900.4 211.5L903.4 207.7L906.9 204.1L910.6 200.6L914.7 197.3L919.1 194.3L923.8 191.4L928.7 188.7L933.8 186.3L939.2 184.1L944.8 182.2L950.5 180.5L956.4 179.1L962.5 177.9L968.6 177.0L974.7 176.4L981.0 176.1L987.2 176.1L993.4 176.4L999.6 176.9L1005.7 177.7L1011.8 178.8L1017.7 180.2L1023.5 181.8L1029.1 183.7L1034.5 185.8L1039.7 188.2L1044.7 190.8L1049.4 193.7L1053.8 196.7L1058.0 199.9L1061.8 203.4L1065.3 207.0L1068.5 210.7L1071.2 214.6L1073.7 218.6L1075.7 222.6L1077.4 226.8L1078.5 230.5L1078.8 229.3L1079.6 225.0L1080.0 220.6L1079.9 216.3L1079.5 212.0L1078.6 207.7L1077.4 203.4L1075.7 199.3L1073.7 195.2L1071.2 191.2L1068.5 187.3L1065.3 183.6L1061.8 180.0L1058.0 176.6L1053.8 173.3L1049.4 170.3L1044.7 167.5L1039.7 164.8L1034.5 162.5L1029.1 160.3L1023.5 158.4L1017.7 156.8L1011.8 155.4L1005.7 154.3L999.6 153.5L993.4 153.0L987.2 152.7L981.0 152.8L974.7 153.1L968.6 153.7L962.5 154.5L956.4 155.7L950.5 157.1L944.8 158.8L939.2 160.7L933.8 162.9L928.7 165.3L923.8 168.0z" fill="none" stroke="#062406" stroke-width="0.7" stroke-linejoin="round"/><path d="M1079.6 224.9L1079.5 223.7M1079.5 223.7L1078.6 219.4M1078.6 219.4L1077.4 215.1M1077.4 215.1L1075.7 211.0M1075.7 211.0L1073.7 206.9M1073.7 206.9L1071.2 202.9M1071.2 202.9L1068.5 199.0M1068.5 199.0L1065.3 195.3M1065.3 195.3L1061.8 191.7M1061.8 191.7L1058.0 188.3M1058.0 188.3L1053.8 185.0M1053.8 185.0L1049.4 182.0M1049.4 182.0L1044.7 179.1M1044.7 179.1L1039.7 176.5M1039.7 176.5L1034.5 174.1M1034.5 174.1L1029.1 172.0M1029.1 172.0L1023.5 170.1M1023.5 170.1L1017.7 168.5M1017.7 168.5L1011.8 167.1M1011.8 167.1L1005.7 166.0M1005.7 166.0L999.6 165.2M999.6 165.2L993.4 164.7M993.4 164.7L987.2 164.4M987.2 164.4L981.0 164.4M981.0 164.4L974.7 164.8M974.7 164.8L968.6 165.3M968.6 165.3L962.5 166.2M962.5 166.2L956.4 167.4M956.4 167.4L950.5 168.8M950.5 168.8L944.8 170.5M944.8 170.5L939.2 172.4M939.2 172.4L933.8 174.6M933.8 174.6L928.7 177.0M928.7 177.0L923.8 179.7M923.8 179.7L919.1 182.6M919.1 182.6L914.7 185.7M914.7 185.7L910.6 188.9M910.6 188.9L906.9 192.4M906.9 192.4L903.4 196.0M903.4 196.0L900.4 199.8M900.4 199.8L897.6 203.7M897.6 203.7L895.3 207.7M895.3 207.7L893.3 211.8M893.3 211.8L891.7 216.0M891.7 216.0L890.6 220.2M890.6 220.2L889.8 224.5M889.8 224.5L889.8 224.6" fill="none" stroke="#062406" stroke-width="0.6"/><path d="M1030.1 218.3L1030.1 194.4L1027.7 192.4L1027.7 216.3z" fill="#097309"/><path d="M1031.9 220.1L1031.9 196.1L1029.7 194.1L1029.7 218.0z" fill="#096c09"/><path d="M1035.1 223.8L1035.1 199.8L1031.5 195.7L1031.5 219.7z" fill="#096409"/><path d="M1066.9 208.0L1066.9 185.5L1066.1 184.5L1034.7 199.7L1034.7 223.5z" fill="#0a890a"/><path d="M1034.9 199.8L1031.7 196.2L1027.9 192.9L1027.9 216.3L1031.7 219.6L1034.9 223.2L1066.7 207.9L1066.7 185.2L1066.2 184.7z" fill="none" stroke="#062406" stroke-width="0.7" stroke-linejoin="round"/><path d="M1036.5 225.7L1036.5 210.4L1034.7 208.0L1034.7 223.3z" fill="#085d08"/><path d="M1037.8 227.8L1037.8 212.4L1036.1 209.8L1036.1 225.2z" fill="#085508"/><path d="M1038.9 229.9L1038.9 214.5L1037.4 211.7L1037.4 227.1z" fill="#084e08"/><path d="M1039.8 232.1L1039.8 216.6L1038.5 213.6L1038.5 229.2z" fill="#074607"/><path d="M1072.6 215.6L1072.6 200.5L1039.4 216.5L1039.4 231.6z" fill="#0a890a"/><path d="M1039.6 216.6L1038.7 214.5L1037.6 212.5L1034.9 208.6L1034.9 223.2L1037.6 227.1L1038.7 229.1L1039.6 231.2L1072.4 215.4L1072.4 200.8z" fill="none" stroke="#062406" stroke-width="0.7" stroke-linejoin="round"/><path d="M1072.4 200.8L1069.7 197.0L1066.7 193.3L1034.9 208.6L1037.6 212.5L1038.7 214.5L1039.6 216.6z" fill="#0dc60d" stroke="#062406" stroke-width="0.7" stroke-linejoin="round"/><path d="M930.5 230.4L930.5 206.6L895.4 195.7L894.7 197.3L894.7 219.3z" fill="#0b980b"/><path d="M931.5 228.1L931.5 203.9L930.1 206.7L930.1 230.9z" fill="#084e08"/><path d="M934.0 200.2L931.1 204.6L931.1 228.8L934.0 224.3z" fill="#085508"/><path d="M935.4 222.4L935.4 198.4L933.6 200.8L933.6 224.8z" fill="#085d08"/><path d="M933.8 200.8L931.3 204.7L930.3 206.7L895.3 195.9L894.9 196.8L894.9 219.1L930.3 230.1L932.4 226.1L935.2 222.3L935.2 199.0z" fill="none" stroke="#062406" stroke-width="0.7" stroke-linejoin="round"/><path d="M927.9 238.9L927.9 223.8L891.2 212.4L891.2 227.5z" fill="#0b980b"/><path d="M927.8 239.6L928.3 236.4L928.3 220.8L928.1 220.8L927.5 224.0L927.5 239.6z" fill="#063006"/><path d="M928.1 237.4L928.9 234.3L928.9 218.6L928.7 218.6L927.9 221.8L927.9 237.4z" fill="#073707"/><path d="M929.6 232.2L929.5 216.5L928.5 219.6L928.5 235.2z" fill="#073f07"/><path d="M930.5 230.1L930.5 214.5L929.2 217.5L929.2 233.1z" fill="#074607"/><path d="M929.4 217.5L928.7 219.6L928.1 221.8L927.7 224.0L891.4 212.7L891.4 227.3L927.7 238.6L928.1 236.4L928.7 234.2L929.4 232.1L930.3 230.1L930.3 215.5z" fill="none" stroke="#062406" stroke-width="0.7" stroke-linejoin="round"/><path d="M893.9 206.5L892.1 210.6L891.4 212.7L927.7 224.0L928.1 221.8L928.7 219.6L929.4 217.5L930.3 215.5L894.9 204.5z" fill="#0dc60d" stroke="#062406" stroke-width="0.7" stroke-linejoin="round"/><path d="M1021.8 273.2L1021.8 249.4L1018.4 251.2L1018.4 275.0z" fill="#0a890a"/><path d="M1024.6 271.5L1024.6 247.6L1021.4 249.6L1021.4 273.5z" fill="#0a820a"/><path d="M1027.3 269.6L1027.3 245.7L1024.2 247.9L1024.2 271.7z" fill="#0a7a0a"/><path d="M1029.7 267.6L1029.7 243.7L1026.9 246.0L1026.9 269.9z" fill="#097309"/><path d="M1032.0 265.5L1032.0 241.6L1029.3 244.0L1029.3 268.0z" fill="#096c09"/><path d="M1036.0 261.0L1036.0 237.0L1031.6 242.0L1031.6 265.9z" fill="#096409"/><path d="M1037.6 258.6L1037.6 234.6L1035.6 237.5L1035.6 261.6z" fill="#085d08"/><path d="M1039.0 256.2L1039.0 232.0L1037.2 235.1L1037.2 259.3z" fill="#085508"/><path d="M1040.2 253.7L1040.2 229.4L1038.6 232.7L1038.6 257.0z" fill="#074607"/><path d="M1041.2 251.2L1041.1 226.8L1039.8 230.2L1039.8 254.6z" fill="#073f07"/><path d="M1040.9 252.1L1041.9 248.6L1041.9 224.2L1041.8 224.2L1040.8 227.7L1040.8 252.1z" fill="#073707"/><path d="M1041.7 249.6L1042.4 246.0L1042.4 221.6L1042.1 221.6L1041.5 225.2L1041.5 249.5z" fill="#063006"/><path d="M1042.3 247.0L1042.6 243.3L1042.6 219.0L1042.3 218.9L1042.0 222.6L1042.0 246.9z" fill="#062906"/><path d="M926.9 244.9L927.2 244.9L927.2 216.8L926.8 216.9z" fill="#062106"/><path d="M927.2 247.5L927.5 247.5L927.5 223.1L927.1 219.5L926.8 219.5L926.8 243.9z" fill="#062906"/><path d="M927.8 250.1L928.0 250.1L928.0 225.7L927.3 222.1L927.1 222.1L927.1 246.5z" fill="#063006"/><path d="M928.8 252.6L928.8 228.2L927.7 224.7L927.6 249.1z" fill="#073707"/><path d="M929.8 255.1L929.8 230.7L928.4 227.3L928.4 251.7z" fill="#074607"/><path d="M931.0 257.5L931.0 233.2L929.4 229.9L929.4 254.2z" fill="#084e08"/><path d="M932.5 259.8L932.5 235.6L930.6 232.5L930.6 256.7z" fill="#085508"/><path d="M934.2 262.0L934.2 238.0L932.1 235.1L932.1 259.1z" fill="#085d08"/><path d="M936.1 264.2L936.1 240.2L933.8 237.5L933.8 261.5z" fill="#096409"/><path d="M938.2 266.3L938.2 242.4L935.7 239.8L935.7 263.7z" fill="#096c09"/><path d="M943.0 270.3L943.0 246.4L937.8 242.0L937.8 265.9z" fill="#097309"/><path d="M945.7 272.1L945.7 248.2L942.6 246.1L942.6 270.0z" fill="#0a7a0a"/><path d="M948.6 273.8L948.6 249.9L945.3 248.0L945.3 271.8z" fill="#0a820a"/><path d="M954.8 276.8L954.8 252.9L948.2 249.7L948.2 273.5z" fill="#0a890a"/><path d="M958.0 278.0L958.0 254.2L954.4 252.8L954.4 276.6z" fill="#0b910b"/><path d="M968.5 281.0L968.5 257.2L961.3 255.3L957.6 254.1L957.6 277.9L961.0 279.0z" fill="#0b980b"/><path d="M990.7 258.6L983.2 258.8L975.7 258.3L968.1 257.1L968.1 280.9L975.9 282.1L979.6 282.4L986.8 282.5L994.3 282.0L1002.0 280.7L1002.0 256.9L998.1 257.7z" fill="#0ca00c"/><path d="M1009.1 278.8L1009.1 255.0L1001.6 257.0L1001.6 280.8z" fill="#0b980b"/><path d="M1015.7 276.3L1015.7 252.5L1008.7 255.2L1008.7 279.0z" fill="#0b910b"/><path d="M1018.8 274.8L1018.8 251.0L1015.3 252.7L1015.3 276.5z" fill="#0a890a"/><path d="M930.8 256.6L932.3 259.1L934.0 261.4L935.9 263.7L938.0 265.8L940.3 267.9L942.8 269.9L945.5 271.7L948.4 273.4L951.4 275.0L954.6 276.5L957.8 277.8L961.2 278.9L964.7 279.9L968.3 280.7L972.0 281.4L975.7 281.9L979.4 282.2L983.2 282.3L987.0 282.3L990.7 282.1L994.5 281.8L998.2 281.3L1001.8 280.6L1005.4 279.7L1008.9 278.7L1012.2 277.5L1015.5 276.2L1018.6 274.7L1021.6 273.1L1024.4 271.4L1027.1 269.5L1029.5 267.5L1031.8 265.4L1033.9 263.2L1035.8 260.9L1037.4 258.6L1038.8 256.2L1040.0 253.7L1041.0 251.1L1041.7 248.5L1042.2 245.9L1042.4 243.3L1042.4 219.9L1042.2 222.6L1041.7 225.2L1041.0 227.7L1040.0 230.3L1038.8 232.8L1037.4 235.2L1035.8 237.6L1033.9 239.8L1031.8 242.0L1029.5 244.1L1027.1 246.1L1024.4 248.0L1021.6 249.7L1018.6 251.3L1015.5 252.8L1012.2 254.1L1008.9 255.3L1005.4 256.3L1001.8 257.2L998.2 257.9L994.5 258.4L990.7 258.8L987.0 259.0L983.2 259.0L979.4 258.8L975.7 258.5L972.0 258.0L968.3 257.3L964.7 256.5L961.2 255.5L957.8 254.4L954.6 253.1L951.4 251.6L948.4 250.0L945.5 248.3L942.8 246.5L940.3 244.5L938.0 242.5L935.9 240.3L934.0 238.0L932.3 235.7L930.8 233.3L929.6 230.8L928.6 228.3L927.8 225.7L927.3 223.1L927.0 220.5L927.0 217.9L927.0 243.9L927.3 246.5L927.8 249.1L928.6 251.6L929.6 254.2z" fill="none" stroke="#062406" stroke-width="0.7" stroke-linejoin="round"/><path d="M1018.6 263.0L1021.6 261.4M1021.6 261.4L1024.4 259.7M1024.4 259.7L1027.1 257.8M1027.1 257.8L1029.5 255.8M1029.5 255.8L1031.8 253.7M1031.8 253.7L1033.9 251.5M1033.9 251.5L1035.8 249.3M1035.8 249.3L1037.4 246.9M1037.4 246.9L1038.8 244.5M1038.8 244.5L1040.0 242.0M1040.0 242.0L1041.0 239.4M1041.0 239.4L1041.7 236.9M1041.7 236.9L1042.2 234.3M1042.2 234.3L1042.4 231.6M927.0 229.5L927.0 232.2M927.0 232.2L927.3 234.8M927.3 234.8L927.8 237.4M927.8 237.4L928.6 239.9M928.6 239.9L929.6 242.5M929.6 242.5L930.8 245.0M930.8 245.0L932.3 247.4M932.3 247.4L934.0 249.7M934.0 249.7L935.9 252.0M935.9 252.0L938.0 254.1M938.0 254.1L940.3 256.2M940.3 256.2L942.8 258.2M942.8 258.2L945.5 260.0M945.5 260.0L948.4 261.7M948.4 261.7L951.4 263.3M951.4 263.3L954.6 264.8M954.6 264.8L957.8 266.1M957.8 266.1L961.2 267.2M961.2 267.2L964.7 268.2M964.7 268.2L968.3 269.0M968.3 269.0L972.0 269.7M972.0 269.7L975.7 270.2M975.7 270.2L979.4 270.5M979.4 270.5L983.2 270.7M983.2 270.7L987.0 270.6M987.0 270.6L990.7 270.5M990.7 270.5L994.5 270.1M994.5 270.1L998.2 269.6M998.2 269.6L1001.8 268.9M1001.8 268.9L1005.4 268.0M1005.4 268.0L1008.9 267.0M1008.9 267.0L1012.2 265.8M1012.2 265.8L1015.5 264.5M1015.5 264.5L1018.6 263.0" fill="none" stroke="#062406" stroke-width="0.6"/><path d="M999.2 284.3L1002.4 283.9L998.7 265.2L998.5 265.2L998.5 280.8z" fill="#063006"/><path d="M998.7 280.8L999.4 284.3L1002.2 283.9L998.7 266.2z" fill="none" stroke="#062406" stroke-width="0.7" stroke-linejoin="round"/><path d="M1010.4 263.2L1004.6 264.9L998.7 266.2L1002.2 283.9L1006.9 283.3L1014.1 281.8z" fill="#0dc60d" stroke="#062406" stroke-width="0.7" stroke-linejoin="round"/><path d="M987.0 285.1L992.1 284.9L986.6 257.6L986.4 257.6L986.4 282.0z" fill="#063006"/><path d="M986.6 282.0L987.2 285.1L991.9 284.9L986.6 258.6z" fill="none" stroke="#062406" stroke-width="0.7" stroke-linejoin="round"/><path d="M974.6 284.7L978.0 284.9L974.1 265.7L973.9 265.7L973.9 281.3z" fill="#063006"/><path d="M974.1 281.3L974.8 284.7L977.8 284.9L974.1 266.7z" fill="none" stroke="#062406" stroke-width="0.7" stroke-linejoin="round"/><path d="M986.6 267.4L980.4 267.3L974.1 266.7L977.8 284.9L982.2 285.1L990.1 285.0z" fill="#0dc60d" stroke="#062406" stroke-width="0.7" stroke-linejoin="round"/><path d="M1033.0 216.6L1033.0 222.1L1033.2 219.8L1033.2 217.6L1033.1 216.6z" fill="#062106"/><path d="M1032.7 214.4L1032.7 223.4L1033.0 222.0L1033.2 219.8L1033.2 217.6z" fill="#062906"/><path d="M1033.1 217.3L1032.9 215.4L1032.3 212.5L1032.3 225.3L1033.0 222.0L1033.1 220.4z" fill="#063006"/><path d="M1032.7 214.2L1031.8 210.8L1031.7 227.2L1032.7 223.6z" fill="#073707"/><path d="M1032.1 211.7L1030.8 208.6L1030.8 229.3L1032.1 226.1z" fill="#074607"/><path d="M1031.2 209.4L1029.8 206.5L1029.8 230.3L1030.1 230.8L1031.2 228.4z" fill="#084e08"/><path d="M1030.2 207.2L1028.5 204.5L1028.5 228.2L1030.1 230.8L1030.2 230.6z" fill="#085508"/><path d="M1028.9 205.1L1027.1 202.6L1027.1 226.3L1028.9 228.8z" fill="#085d08"/><path d="M1027.5 203.1L1025.5 200.7L1025.5 224.4L1027.5 226.7z" fill="#096409"/><path d="M1025.9 201.2L1023.7 198.9L1023.7 222.6L1025.9 224.8z" fill="#096c09"/><path d="M1019.7 219.2L1024.1 222.9L1024.1 199.3L1022.0 197.4L1019.7 195.6z" fill="#097309"/><path d="M1020.1 195.9L1017.4 194.0L1017.4 217.6L1020.1 219.5z" fill="#0a7a0a"/><path d="M1017.8 194.3L1015.0 192.6L1015.0 216.2L1017.8 217.9z" fill="#0a820a"/><path d="M1009.8 213.7L1015.4 216.4L1015.4 192.8L1012.7 191.4L1009.8 190.1z" fill="#0a890a"/><path d="M1010.2 190.3L1007.1 189.0L1007.1 212.6L1010.2 213.8z" fill="#0b910b"/><path d="M998.3 210.1L1004.4 211.7L1007.5 212.7L1007.5 189.2L1004.4 188.1L1001.5 187.3L998.3 186.6z" fill="#0b980b"/><path d="M970.1 210.3L976.5 209.3L982.8 208.8L986.0 208.8L992.3 209.2L998.7 210.2L998.7 186.6L995.4 186.0L992.3 185.6L986.0 185.2L982.8 185.2L976.5 185.7L973.4 186.1L970.1 186.8z" fill="#0ca00c"/><path d="M964.2 211.9L970.5 210.3L970.5 186.7L967.3 187.4L964.2 188.4z" fill="#0b980b"/><path d="M958.6 214.1L964.6 211.8L964.6 188.2L961.6 189.3L958.6 190.5z" fill="#0b910b"/><path d="M953.5 216.7L959.0 213.9L959.0 190.3L956.2 191.6L953.5 193.1z" fill="#0a890a"/><path d="M953.9 192.9L951.1 194.6L951.1 218.2L953.9 216.5z" fill="#0a820a"/><path d="M951.5 194.3L948.9 196.2L948.9 219.8L951.5 217.9z" fill="#0a7a0a"/><path d="M949.3 195.9L946.8 197.9L946.8 221.5L949.3 219.5z" fill="#097309"/><path d="M947.2 197.5L944.9 199.7L944.9 223.3L947.2 221.2z" fill="#096c09"/><path d="M941.6 227.2L945.3 222.9L945.3 199.3L943.3 201.3L941.6 203.5z" fill="#096409"/><path d="M942.0 203.0L940.2 205.5L940.2 229.2L942.0 226.7z" fill="#085d08"/><path d="M940.6 204.9L939.0 207.7L939.0 230.1L939.3 230.8L940.6 228.6z" fill="#085508"/><path d="M939.4 206.9L938.0 209.9L938.0 227.9L939.3 230.8z" fill="#074607"/><path d="M938.4 208.9L937.2 212.2L937.2 225.6L938.4 228.9z" fill="#073f07"/><path d="M937.6 210.9L936.8 213.6L936.6 214.7L936.6 223.1L936.9 224.6L937.6 226.9z" fill="#073707"/><path d="M937.0 212.9L936.4 215.8L936.2 218.0L936.2 220.2L936.5 222.4L937.0 224.9z" fill="#063006"/><path d="M936.6 214.8L936.2 218.0L936.2 220.2L936.6 223.1z" fill="#062906"/><path d="M951.3 194.5L949.1 196.0L947.0 197.7L945.1 199.5L943.3 201.3L941.8 203.2L940.4 205.2L939.2 207.2L938.2 209.3L937.4 211.5L936.8 213.6L936.4 215.8L936.2 218.0L936.2 220.2L936.5 222.4L936.9 224.6L937.5 226.8L938.4 228.9L939.2 230.6L940.4 228.6L941.8 226.6L943.3 224.7L945.1 222.8L947.0 221.1L949.1 219.4L951.3 217.8L953.7 216.4L956.2 215.0L958.8 213.8L964.4 211.7L970.3 210.1L976.5 209.1L982.8 208.6L989.1 208.7L995.4 209.4L1001.5 210.7L1004.4 211.5L1010.0 213.6L1012.7 214.8L1015.2 216.1L1017.6 217.5L1019.9 219.1L1022.0 220.7L1023.9 222.5L1025.7 224.3L1027.3 226.2L1028.7 228.2L1030.2 230.6L1031.2 228.5L1032.0 226.3L1032.6 224.2L1033.0 222.0L1033.2 219.8L1033.2 217.6L1032.9 215.4L1032.5 213.2L1031.9 211.0L1031.0 208.9L1030.0 206.8L1028.7 204.8L1027.3 202.8L1025.7 200.9L1023.9 199.1L1022.0 197.4L1019.9 195.7L1017.6 194.2L1015.2 192.7L1012.7 191.4L1010.0 190.2L1004.4 188.1L1001.5 187.3L995.4 186.0L992.3 185.6L986.0 185.2L979.6 185.4L976.5 185.7L970.3 186.7L964.4 188.3L958.8 190.4L956.2 191.6L953.7 193.0z" fill="none" stroke="#062406" stroke-width="0.7" stroke-linejoin="round"/><path d="M1032.9 222.2L1032.5 220.0L1031.9 217.9L1031.0 215.7L1030.0 213.7L1028.7 211.6L1027.3 209.7L1025.7 207.8L1023.9 205.9L1022.0 204.2L1019.9 202.5L1017.6 201.0L1015.2 199.6L1012.7 198.2L1007.3 195.9L1004.4 195.0L1001.5 194.1L995.4 192.9L989.1 192.2L986.0 192.1L982.8 192.1L976.5 192.5L970.3 193.6L964.4 195.1L961.6 196.1L956.2 198.5L953.7 199.8L951.3 201.3L949.1 202.9L947.0 204.5L945.1 206.3L943.3 208.1L941.8 210.0L940.4 212.0L939.2 214.1L938.2 216.2L937.4 218.3L936.8 220.5L936.5 222.3L936.9 224.6L937.5 226.8L938.4 228.9L939.4 231.0L940.7 233.0L942.1 235.0L943.7 236.9L945.5 238.7L947.4 240.4L949.5 242.1L951.8 243.6L954.2 245.1L956.7 246.4L962.1 248.7L965.0 249.7L967.9 250.5L974.0 251.8L977.1 252.2L983.4 252.6L986.6 252.6L992.9 252.1L999.1 251.1L1002.1 250.4L1007.8 248.5L1013.2 246.2L1015.7 244.8L1018.1 243.3L1020.3 241.8L1022.4 240.1L1024.3 238.3L1026.1 236.5L1027.6 234.6L1029.0 232.6L1030.2 230.6L1031.2 228.5L1032.0 226.3L1032.6 224.2z" fill="#343434" stroke="#101010" stroke-width="0.7" stroke-linejoin="round"/><path d="M949.9 231.6L950.3 230.8L950.2 230.0L949.7 229.3L948.9 228.7L947.8 228.5L946.6 228.5L945.5 228.8L944.8 229.4L944.3 230.2L944.4 231.0L944.9 231.7L945.7 232.3L946.8 232.6L948.0 232.5L949.1 232.2z" fill="#303030" stroke="#141414" stroke-width="0.7" stroke-linejoin="round"/><path d="M959.5 240.8L959.9 240.1L959.9 239.3L959.4 238.5L958.5 238.0L957.4 237.7L956.3 237.7L955.2 238.1L954.4 238.6L954.0 239.4L954.0 240.2L954.5 241.0L955.4 241.5L956.5 241.8L957.7 241.8L958.7 241.4z" fill="#303030" stroke="#141414" stroke-width="0.7" stroke-linejoin="round"/><path d="M969.1 250.0L969.6 249.3L969.5 248.5L969.0 247.7L968.2 247.2L967.1 246.9L965.9 246.9L964.8 247.3L964.0 247.9L963.6 248.6L963.7 249.2L967.9 250.5L968.4 250.6z" fill="#303030" stroke="#141414" stroke-width="0.7" stroke-linejoin="round"/><path d="M1005.4 203.6L1005.8 202.8L1005.7 202.0L1005.2 201.3L1004.4 200.7L1003.3 200.5L1002.1 200.5L1001.0 200.8L1000.3 201.4L999.8 202.2L999.9 203.0L1000.4 203.7L1001.2 204.3L1002.3 204.6L1003.5 204.5L1004.6 204.2z" fill="#303030" stroke="#141414" stroke-width="0.7" stroke-linejoin="round"/><path d="M1015.0 212.8L1015.4 212.1L1015.4 211.2L1014.9 210.5L1014.0 210.0L1012.9 209.7L1011.7 209.7L1010.7 210.0L1009.9 210.6L1009.5 211.4L1009.5 212.2L1010.0 213.0L1010.9 213.5L1012.0 213.8L1013.1 213.8L1014.2 213.4z" fill="#303030" stroke="#141414" stroke-width="0.7" stroke-linejoin="round"/><path d="M1024.6 222.0L1025.1 221.3L1025.0 220.5L1024.5 219.7L1023.7 219.2L1022.6 218.9L1021.4 218.9L1020.3 219.3L1019.5 219.9L1019.1 220.6L1019.2 221.4L1019.7 222.2L1020.5 222.7L1021.6 223.0L1022.8 223.0L1023.9 222.6z" fill="#303030" stroke="#141414" stroke-width="0.7" stroke-linejoin="round"/><path d="M953.8 214.2L954.2 213.5L954.2 212.7L953.7 211.9L952.8 211.4L951.7 211.1L950.6 211.1L949.5 211.5L948.7 212.1L948.3 212.8L948.4 213.6L948.8 214.4L949.7 214.9L950.8 215.2L952.0 215.2L953.0 214.8z" fill="#303030" stroke="#141414" stroke-width="0.7" stroke-linejoin="round"/><path d="M967.1 207.5L967.5 206.8L967.5 206.0L967.0 205.2L966.1 204.7L965.0 204.4L963.8 204.4L962.8 204.8L962.0 205.4L961.6 206.1L961.6 206.9L962.1 207.7L963.0 208.2L964.1 208.5L965.2 208.5L966.3 208.1z" fill="#303030" stroke="#141414" stroke-width="0.7" stroke-linejoin="round"/><path d="M980.4 200.9L980.8 200.1L980.7 199.3L980.2 198.5L979.4 198.0L978.3 197.7L977.1 197.7L976.0 198.1L975.2 198.7L974.8 199.4L974.9 200.2L975.4 201.0L976.2 201.5L977.3 201.8L978.5 201.8L979.6 201.4z" fill="#303030" stroke="#141414" stroke-width="0.7" stroke-linejoin="round"/><path d="M994.5 251.2L994.0 250.5L993.2 249.9L992.1 249.6L990.9 249.7L989.8 250.0L989.0 250.6L988.6 251.4L988.7 252.2L988.8 252.5L989.8 252.4L994.5 251.9z" fill="#303030" stroke="#141414" stroke-width="0.7" stroke-linejoin="round"/><path d="M1007.4 246.1L1007.8 245.3L1007.8 244.5L1007.3 243.8L1006.4 243.2L1005.3 243.0L1004.2 243.0L1003.1 243.3L1002.3 243.9L1001.9 244.7L1001.9 245.5L1002.4 246.2L1003.3 246.8L1004.4 247.1L1005.6 247.0L1006.6 246.7z" fill="#303030" stroke="#141414" stroke-width="0.7" stroke-linejoin="round"/><path d="M1020.7 239.4L1021.1 238.6L1021.0 237.8L1020.6 237.1L1019.7 236.5L1018.6 236.3L1017.4 236.3L1016.4 236.6L1015.6 237.2L1015.2 238.0L1015.2 238.8L1015.7 239.5L1016.6 240.1L1017.7 240.4L1018.8 240.3L1019.9 240.0z" fill="#303030" stroke="#141414" stroke-width="0.7" stroke-linejoin="round"/><path d="M999.3 235.9L1001.4 234.2L1003.1 232.3L1004.4 230.2L1005.1 228.0L1005.4 225.7L1005.1 223.5L1004.4 221.3L1003.1 219.2L1001.4 217.3L999.3 215.6L996.9 214.1L994.1 212.9L991.1 212.1L987.9 211.5L984.7 211.4L981.5 211.5L978.3 212.1L975.3 212.9L972.5 214.1L970.1 215.6L968.0 217.3L966.3 219.2L965.0 221.3L964.3 223.5L964.0 225.7L964.3 228.0L965.0 230.2L966.3 232.3L968.0 234.2L970.1 235.9L972.5 237.4L975.3 238.5L978.3 239.4L981.5 239.9L984.7 240.1L987.9 239.9L991.1 239.4L994.1 238.5L996.9 237.4z" fill="#353535" stroke="#121212" stroke-width="0.6" stroke-linejoin="round"/><path d="M997.1 234.3L998.9 232.9L1000.3 231.3L1001.3 229.5L1002.0 227.6L1002.2 225.7L1002.0 223.8L1001.3 222.0L1000.3 220.2L998.9 218.6L997.1 217.1L995.0 215.9L992.6 214.9L990.1 214.2L987.4 213.7L984.7 213.6L982.0 213.7L979.3 214.2L976.8 214.9L974.4 215.9L972.3 217.1L970.5 218.6L969.1 220.2L968.1 222.0L967.4 223.8L967.2 225.7L967.4 227.6L968.1 229.5L969.1 231.3L970.5 232.9L972.3 234.3L974.4 235.6L976.8 236.6L979.3 237.3L982.0 237.7L984.7 237.9L987.4 237.7L990.1 237.3L992.6 236.6L995.0 235.6z" fill="#303030" stroke="#121212" stroke-width="0.6" stroke-linejoin="round"/><path d="M995.5 232.5L997.1 231.3L998.3 229.8L999.3 228.3L999.8 226.7L1000.0 225.0L999.8 223.4L999.3 221.7L998.3 220.2L997.1 218.8L995.5 217.5L993.7 216.4L991.6 215.5L989.4 214.9L987.1 214.5L984.7 214.4L982.3 214.5L980.0 214.9L977.8 215.5L975.7 216.4L973.9 217.5L972.3 218.8L971.1 220.2L970.1 221.7L969.6 223.4L969.4 225.0L969.6 226.7L970.1 228.3L971.1 229.8L972.3 231.3L973.9 232.5L975.7 233.6L977.8 234.5L980.0 235.1L982.3 235.5L984.7 235.6L987.1 235.5L989.4 235.1L991.6 234.5L993.7 233.6z" fill="#343434" stroke="#121212" stroke-width="0.6" stroke-linejoin="round"/><path d="M993.4 231.1L994.7 230.0L995.7 228.9L996.4 227.7L996.8 226.4L997.0 225.0L996.8 223.7L996.4 222.4L995.7 221.1L994.7 220.0L993.4 219.0L991.9 218.1L990.3 217.4L988.5 216.9L986.6 216.6L984.7 216.5L982.8 216.6L980.9 216.9L979.1 217.4L977.5 218.1L976.0 219.0L974.7 220.0L973.7 221.1L973.0 222.4L972.6 223.7L972.4 225.0L972.6 226.4L973.0 227.7L973.7 228.9L974.7 230.0L976.0 231.1L977.5 231.9L979.1 232.6L980.9 233.1L982.8 233.5L984.7 233.6L986.6 233.5L988.5 233.1L990.3 232.6L991.9 231.9z" fill="#2f2f2f" stroke="#121212" stroke-width="0.6" stroke-linejoin="round"/><path d="M989.3 228.2L990.0 227.7L990.9 226.4L991.2 225.0L990.9 223.6L990.5 223.0L990.0 222.4L988.5 221.4L986.7 220.7L985.7 220.6L983.7 220.6L982.7 220.7L980.9 221.4L980.1 221.8L979.4 222.4L978.5 223.6L978.2 225.0L978.5 226.4L979.4 227.7L980.9 228.7L982.7 229.3L983.7 229.5L985.7 229.5L987.7 229.0z" fill="#363636" stroke="#121212" stroke-width="0.6" stroke-linejoin="round"/><path d="M987.7 228.2L988.1 227.8L988.7 227.0L988.9 226.1L988.8 225.6L988.7 225.2L988.1 224.4L987.7 224.0L986.6 223.5L985.4 223.2L983.4 223.3L981.7 224.0L981.0 224.8L980.7 225.2L980.5 226.1L980.7 227.0L981.3 227.8L981.7 228.2L982.8 228.7L984.0 229.0L985.4 229.0L986.6 228.7z" fill="#2a2a2a" stroke="#121212" stroke-width="0.6" stroke-linejoin="round"/><path d="M1029.4 299.8L1021.7 301.7L1013.8 303.2L1005.8 304.3L997.7 305.1L989.6 305.5L981.4 305.6L973.3 305.2L965.2 304.5L957.2 303.5L949.3 302.0L941.5 300.2L933.9 298.1L926.6 295.6L919.5 292.8L912.7 289.7L906.2 286.3L900.0 282.6L894.2 278.6L888.7 274.3L883.7 269.9L879.2 265.2L875.0 260.3L871.4 255.2L868.2 250.0L865.5 244.6L863.3 239.1L861.7 233.6L860.6 228.0L860.0 222.3L859.9 216.6L860.4 211.0L861.4 205.3L863.0 199.8L865.0 194.3L867.6 188.9L870.7 183.6L874.3 178.5L878.3 173.6L882.8 168.9L887.7 164.3L893.1 160.1L898.8 156.0L904.9 152.2L911.3 148.8L918.1 145.6L925.2 142.7L932.5 140.2L940.0 138.0L947.7 136.1L955.6 134.6L963.6 133.5L971.7 132.7L979.8 132.3L988.0 132.2L996.1 132.6L1004.2 133.3L1012.2 134.3L1020.1 135.8L1027.9 137.6L1035.5 139.7L1042.8 142.2L1049.9 145.0L1056.7 148.1L1063.2 151.5L1069.4 155.2L1075.2 159.2L1080.7 163.5L1085.7 167.9L1090.2 172.6L1094.4 177.5L1098.0 182.6L1101.2 187.8L1103.9 193.2L1106.1 198.7L1107.7 204.2L1108.8 209.8L1109.4 215.5L1109.5 221.2L1109.0 226.8L1108.0 232.5L1106.4 238.0L1104.4 243.5L1101.8 248.9L1098.7 254.2L1095.1 259.3L1091.1 264.2L1086.6 268.9L1081.7 273.5L1076.3 277.7L1070.6 281.8L1064.5 285.6L1058.1 289.0L1051.3 292.2L1044.2 295.1L1036.9 297.6zM1054.7 263.8L1058.8 260.6L1062.5 257.1L1066.0 253.5L1069.0 249.7L1071.8 245.8L1074.1 241.8L1076.1 237.7L1077.7 233.5L1078.8 229.3L1079.6 225.0L1080.0 220.6L1079.9 216.3L1079.5 212.0L1078.6 207.7L1077.4 203.4L1075.7 199.3L1073.7 195.2L1071.2 191.2L1068.5 187.3L1066.2 184.7L1035.3 199.6L1037.1 202.1L1038.6 204.5L1039.8 207.0L1040.8 209.5L1041.6 212.1L1042.1 214.7L1042.4 217.3L1042.4 219.9L1042.2 222.6L1041.7 225.2L1041.0 227.7L1040.0 230.3L1038.8 232.8L1037.4 235.2L1035.8 237.6L1033.9 239.8L1031.8 242.0L1029.5 244.1L1027.1 246.1L1024.4 248.0L1021.6 249.7L1018.6 251.3L1015.5 252.8L1012.2 254.1L1008.9 255.3L1005.4 256.3L1001.8 257.2L998.7 257.8L1004.0 283.7L1006.9 283.3L1013.0 282.1L1018.9 280.7L1024.6 279.0L1030.2 277.1L1035.6 274.9L1040.7 272.5L1045.6 269.8L1050.3 266.9zM983.2 259.0L979.4 258.8L975.7 258.5L972.0 258.0L968.3 257.3L964.7 256.5L961.2 255.5L957.8 254.4L954.6 253.1L951.4 251.6L948.4 250.0L945.5 248.3L942.8 246.5L940.3 244.5L938.0 242.5L935.9 240.3L934.0 238.0L932.3 235.7L930.8 233.3L929.6 230.8L928.6 228.3L927.8 225.7L927.3 223.1L927.0 220.5L927.0 217.9L927.2 215.2L927.7 212.6L928.4 210.1L929.8 206.6L895.3 195.9L893.3 200.1L891.7 204.3L890.6 208.5L889.8 212.8L889.4 217.2L889.5 221.5L889.9 225.8L890.8 230.1L892.0 234.4L893.7 238.5L895.7 242.6L898.2 246.6L900.9 250.5L904.1 254.2L907.6 257.8L911.4 261.2L915.6 264.5L920.0 267.5L924.7 270.3L929.7 273.0L934.9 275.3L940.3 277.5L945.9 279.4L951.7 281.0L957.6 282.4L963.7 283.5L969.8 284.3L976.0 284.8L982.2 285.1L988.4 285.0L991.9 284.9L986.6 259.0zM937.6 195.8L939.9 193.7L942.3 191.7L945.0 189.8L947.8 188.1L950.8 186.5L953.9 185.0L957.2 183.7L960.5 182.5L964.0 181.5L967.6 180.6L971.2 179.9L974.9 179.4L978.7 179.0L982.4 178.8L986.2 178.8L990.0 179.0L993.7 179.3L997.4 179.8L1001.1 180.5L1004.7 181.3L1008.2 182.3L1011.6 183.4L1014.8 184.7L1018.0 186.2L1021.0 187.8L1023.9 189.5L1026.6 191.3L1028.3 192.7L1059.3 177.7L1058.0 176.6L1053.8 173.3L1049.4 170.3L1044.7 167.5L1039.7 164.8L1034.5 162.5L1029.1 160.3L1023.5 158.4L1017.7 156.8L1011.8 155.4L1005.7 154.3L999.6 153.5L993.4 153.0L987.2 152.7L981.0 152.8L974.7 153.1L968.6 153.7L962.5 154.5L956.4 155.7L950.5 157.1L944.8 158.8L939.2 160.7L933.8 162.9L928.7 165.3L923.8 168.0L919.1 170.9L914.7 174.0L910.6 177.2L906.9 180.7L903.4 184.3L900.3 188.2L934.8 198.8zM1020.3 241.8L1022.4 240.1L1024.3 238.3L1026.1 236.5L1027.6 234.6L1029.0 232.6L1030.2 230.6L1031.2 228.5L1032.0 226.3L1032.6 224.2L1033.0 222.0L1033.2 219.8L1033.2 217.6L1032.9 215.4L1032.5 213.2L1031.9 211.0L1031.0 208.9L1030.0 206.8L1028.7 204.8L1027.3 202.8L1025.7 200.9L1023.9 199.1L1022.0 197.4L1019.9 195.7L1017.6 194.2L1015.2 192.7L1012.7 191.4L1007.3 189.1L1001.5 187.3L995.4 186.0L992.3 185.6L986.0 185.2L979.6 185.4L976.5 185.7L970.3 186.7L964.4 188.3L958.8 190.4L956.2 191.6L953.7 193.0L951.3 194.5L949.1 196.0L947.0 197.7L945.1 199.5L943.3 201.3L941.8 203.2L940.4 205.2L939.2 207.2L938.2 209.3L937.4 211.5L936.8 213.6L936.4 215.8L936.2 218.0L936.2 220.2L936.5 222.4L936.9 224.6L937.5 226.8L938.4 228.9L939.4 231.0L940.7 233.0L942.1 235.0L943.7 236.9L945.5 238.7L947.4 240.4L949.5 242.1L951.8 243.6L954.2 245.1L956.7 246.4L962.1 248.7L965.0 249.7L970.9 251.2L977.1 252.2L983.4 252.6L986.6 252.6L992.9 252.1L999.1 251.1L1002.1 250.4L1007.8 248.5L1013.2 246.2L1015.7 244.8L1018.1 243.3z" fill="#0dc60d" stroke="#062406" stroke-width="0.7" stroke-linejoin="round"/></svg><!--/Gv3--><div class="vp" id="v2" style="left:341px;top:403px;width:426px;height:305px"></div><svg class="abs" style="left:341px;top:403px" width="426" height="305" viewBox="341 403 426 305"><g transform="translate(553.500 555.400)"><circle r="128" fill="none" stroke="#0a0a0a" stroke-width="6.600"/><rect transform="rotate(0)" x="-18.3" y="-99" width="36.6" height="45" fill="#09ff09"/><rect transform="rotate(120)" x="-18.3" y="-99" width="36.6" height="45" fill="#09ff09"/><rect transform="rotate(240)" x="-18.3" y="-99" width="36.6" height="45" fill="#09ff09"/><path d="M124.8 0A124.8 124.8 0 1 0 -124.8 0A124.8 124.8 0 1 0 124.8 0zM96.9 0A96.9 96.9 0 1 1 -96.9 0A96.9 96.9 0 1 1 96.9 0z" fill="#09ff09" stroke="#062406" stroke-width=".7" fill-rule="evenodd"/><circle r="57.7" fill="#09ff09" stroke="#062406" stroke-width=".7"/><g transform="rotate(0)"><rect x="-17.9" y="-99.5" width="35.8" height="5" fill="#09ff09"/><rect x="-17.9" y="-59" width="35.8" height="5.5" fill="#09ff09"/><path d="M-6.20 -96.70A96.9 96.9 0 0 0 -18.30 -95.16L-18.30 -54.72A57.7 57.7 0 0 1 -6.20 -57.37z" fill="none" stroke="#062406" stroke-width=".75"/><path d="M6.20 -96.70A96.9 96.9 0 0 1 18.30 -95.16L18.30 -54.72A57.7 57.7 0 0 0 6.20 -57.37z" fill="none" stroke="#062406" stroke-width=".75"/></g><g transform="rotate(120)"><rect x="-17.9" y="-99.5" width="35.8" height="5" fill="#09ff09"/><rect x="-17.9" y="-59" width="35.8" height="5.5" fill="#09ff09"/><path d="M-6.20 -96.70A96.9 96.9 0 0 0 -18.30 -95.16L-18.30 -54.72A57.7 57.7 0 0 1 -6.20 -57.37z" fill="none" stroke="#062406" stroke-width=".75"/><path d="M6.20 -96.70A96.9 96.9 0 0 1 18.30 -95.16L18.30 -54.72A57.7 57.7 0 0 0 6.20 -57.37z" fill="none" stroke="#062406" stroke-width=".75"/></g><g transform="rotate(240)"><rect x="-17.9" y="-99.5" width="35.8" height="5" fill="#09ff09"/><rect x="-17.9" y="-59" width="35.8" height="5.5" fill="#09ff09"/><path d="M-6.20 -96.70A96.9 96.9 0 0 0 -18.30 -95.16L-18.30 -54.72A57.7 57.7 0 0 1 -6.20 -57.37z" fill="none" stroke="#062406" stroke-width=".75"/><path d="M6.20 -96.70A96.9 96.9 0 0 1 18.30 -95.16L18.30 -54.72A57.7 57.7 0 0 0 6.20 -57.37z" fill="none" stroke="#062406" stroke-width=".75"/></g><circle r="48.500" fill="#3d3d3d" stroke="#0c0c0c" stroke-width=".95"/><rect x="-19.6" y="-37.5" width="6.4" height="6.4" rx="1.8" fill="#09ff09" stroke="#111" stroke-width=".5"/><rect x="-3.2" y="-37.5" width="6.4" height="6.4" rx="1.8" fill="#09ff09" stroke="#111" stroke-width=".5"/><rect x="13.2" y="-37.5" width="6.4" height="6.4" rx="1.8" fill="#09ff09" stroke="#111" stroke-width=".5"/><rect x="-19.6" y="31.1" width="6.4" height="6.4" rx="1.8" fill="#09ff09" stroke="#111" stroke-width=".5"/><rect x="-3.2" y="31.1" width="6.4" height="6.4" rx="1.8" fill="#09ff09" stroke="#111" stroke-width=".5"/><rect x="13.2" y="31.1" width="6.4" height="6.4" rx="1.8" fill="#09ff09" stroke="#111" stroke-width=".5"/><rect x="-37.5" y="-19.6" width="6.4" height="6.4" rx="1.8" fill="#09ff09" stroke="#111" stroke-width=".5"/><rect x="-37.5" y="-3.2" width="6.4" height="6.4" rx="1.8" fill="#09ff09" stroke="#111" stroke-width=".5"/><rect x="-37.5" y="13.2" width="6.4" height="6.4" rx="1.8" fill="#09ff09" stroke="#111" stroke-width=".5"/><rect x="31.1" y="-19.6" width="6.4" height="6.4" rx="1.8" fill="#09ff09" stroke="#111" stroke-width=".5"/><rect x="31.1" y="-3.2" width="6.4" height="6.4" rx="1.8" fill="#09ff09" stroke="#111" stroke-width=".5"/><rect x="31.1" y="13.2" width="6.4" height="6.4" rx="1.8" fill="#09ff09" stroke="#111" stroke-width=".5"/><circle r="20.7" fill="#404040" stroke="#161616" stroke-width=".7"/><circle r="17.5" fill="none" stroke="#1c1c1c" stroke-width=".6"/><circle r="15.3" fill="#3a3a3a" stroke="#161616" stroke-width=".7"/><circle r="12.3" fill="#444" stroke="#1c1c1c" stroke-width=".6"/><circle r="6.500" fill="#6e6e92" stroke="#111" stroke-width=".9"/></g></svg><div class="vp" id="v1" style="left:772px;top:403px;width:425px;height:305px"></div><!--Gv1--><svg class="abs" style="left:772px;top:403px" width="425" height="305" viewBox="772 403 425 305"><path d="M1073.1 649.2L1079.9 645.4L1079.9 620.1L1072.9 624.0L1065.8 627.4L1065.8 652.8z" fill="#0a890a"/><path d="M1079.5 645.7L1086.2 641.4L1086.2 616.0L1079.5 620.3z" fill="#0a820a"/><path d="M1085.8 641.7L1092.1 637.1L1092.1 611.7L1085.8 616.3z" fill="#0a7a0a"/><path d="M1091.7 637.4L1097.5 632.6L1097.5 607.1L1091.7 612.0z" fill="#097309"/><path d="M1097.1 632.9L1102.6 627.8L1102.6 602.3L1097.1 607.5z" fill="#096c09"/><path d="M1102.2 628.2L1107.1 622.8L1107.1 597.3L1102.2 602.7z" fill="#096409"/><path d="M1106.7 623.3L1111.2 617.5L1111.2 592.0L1106.7 597.7z" fill="#085d08"/><path d="M1110.8 618.1L1114.8 612.2L1114.8 586.5L1110.8 592.5z" fill="#085508"/><path d="M1114.4 612.9L1117.8 606.7L1117.8 580.9L1114.4 587.2z" fill="#084e08"/><path d="M1117.4 607.5L1120.3 601.0L1120.3 575.1L1117.4 581.7z" fill="#074607"/><path d="M1119.9 601.9L1122.3 595.3L1122.3 569.3L1119.9 576.0z" fill="#073f07"/><path d="M1121.9 596.2L1122.1 596.2L1123.7 589.4L1123.7 563.5L1123.6 563.5L1121.9 570.3z" fill="#073707"/><path d="M1123.3 590.4L1123.6 590.4L1124.6 583.6L1124.6 557.6L1124.4 557.6L1123.3 564.5z" fill="#063006"/><path d="M862.0 584.1L862.3 584.1L862.3 558.2L862.0 551.3L861.7 551.3L861.7 577.2zM1124.6 584.5L1124.9 577.6L1124.9 551.7L1124.6 551.7L1124.2 558.6L1124.2 584.5z" fill="#062906"/><path d="M861.9 583.1L862.9 589.9L863.2 589.9L863.2 564.0L862.2 557.2L861.9 557.2z" fill="#063006"/><path d="M862.8 589.0L864.4 595.8L864.5 595.7L864.5 569.8L862.9 563.0L862.8 563.0z" fill="#073707"/><path d="M864.1 594.8L866.5 601.5L866.5 575.6L864.2 568.9z" fill="#073f07"/><path d="M866.1 600.5L868.9 607.1L868.9 581.2L866.1 574.6z" fill="#074607"/><path d="M868.5 606.2L872.0 612.5L872.0 586.7L868.5 580.5z" fill="#084e08"/><path d="M871.6 611.7L875.5 617.7L875.5 592.1L871.6 586.1z" fill="#085508"/><path d="M875.1 617.1L879.5 622.8L879.5 597.3L875.1 591.6z" fill="#085d08"/><path d="M879.1 622.3L884.0 627.8L884.0 602.3L879.1 596.8z" fill="#096409"/><path d="M883.6 627.4L889.0 632.6L889.0 607.1L883.6 601.9z" fill="#096c09"/><path d="M888.6 632.2L894.5 637.1L894.5 611.7L888.6 606.7z" fill="#097309"/><path d="M894.1 636.8L900.3 641.4L900.3 616.0L894.1 611.4z" fill="#0a7a0a"/><path d="M906.2 645.1L913.2 649.1L913.2 623.7L906.5 619.9L899.9 615.7L899.9 641.1z" fill="#0a820a"/><path d="M912.8 648.9L920.2 652.5L920.2 627.2L912.8 623.5z" fill="#0a890a"/><path d="M927.1 655.5L935.1 658.4L935.1 633.1L927.4 630.2L919.8 627.0L919.8 652.3z" fill="#0b910b"/><path d="M942.5 660.7L950.9 662.9L950.9 637.6L942.7 635.5L934.7 633.0L934.7 658.3z" fill="#0b980b"/><path d="M967.1 665.9L976.0 667.0L984.2 667.5L992.8 667.7L1001.4 667.6L1009.9 667.0L1018.4 666.1L1026.8 664.8L1035.4 663.0L1035.4 637.7L1026.9 639.4L1018.6 640.7L1010.1 641.7L1001.5 642.2L993.0 642.4L984.4 642.2L975.8 641.6L967.4 640.7L959.0 639.3L950.5 637.5L950.5 662.8L959.2 664.6z" fill="#0ca00c"/><path d="M1043.3 661.0L1051.3 658.5L1051.3 633.2L1043.2 635.7L1035.0 637.8L1035.0 663.1z" fill="#0b980b"/><path d="M1058.8 655.8L1066.2 652.6L1066.2 627.3L1058.6 630.5L1050.9 633.3L1050.9 658.6z" fill="#0b910b"/><path d="M868.7 606.2L871.8 611.7L875.3 617.1L879.3 622.3L883.8 627.3L888.8 632.1L894.3 636.7L900.1 641.0L906.4 645.0L913.0 648.8L920.0 652.2L927.3 655.3L934.9 658.1L942.7 660.6L950.7 662.7L959.0 664.4L967.3 665.8L975.8 666.7L984.4 667.3L993.0 667.5L1001.6 667.4L1010.1 666.8L1018.6 665.8L1027.0 664.5L1035.2 662.8L1043.3 660.8L1051.1 658.3L1058.7 655.6L1066.0 652.5L1073.0 649.1L1079.7 645.3L1086.0 641.3L1091.9 637.0L1097.3 632.5L1102.4 627.7L1106.9 622.7L1111.0 617.5L1114.6 612.1L1117.6 606.6L1120.1 601.0L1122.1 595.2L1123.5 589.4L1124.4 583.5L1124.7 577.6L1124.7 552.7L1124.4 558.6L1123.5 564.5L1122.1 570.3L1120.1 576.1L1117.6 581.7L1114.6 587.2L1111.0 592.6L1106.9 597.8L1102.4 602.8L1097.3 607.6L1091.9 612.1L1086.0 616.4L1079.7 620.4L1073.0 624.1L1066.0 627.6L1058.7 630.7L1051.1 633.4L1043.3 635.9L1035.2 637.9L1027.0 639.6L1018.6 640.9L1010.1 641.9L1001.6 642.4L993.0 642.6L984.4 642.4L975.8 641.8L967.3 640.8L959.0 639.5L950.7 637.8L942.7 635.7L934.9 633.2L927.3 630.4L920.0 627.3L913.0 623.9L906.4 620.1L900.1 616.1L894.3 611.7L888.8 607.2L883.8 602.4L879.3 597.4L875.3 592.2L871.8 586.8L868.7 581.2L866.3 575.6L864.3 569.9L863.0 564.0L862.1 558.2L861.9 552.3L861.9 577.2L862.1 583.1L863.0 588.9L864.3 594.8L866.3 600.5z" fill="none" stroke="#062406" stroke-width="0.7" stroke-linejoin="round"/><path d="M1128.7 580.7L1129.9 574.8L1130.5 568.9L1130.6 563.0L1130.1 557.1L1129.1 551.2L1127.2 544.0L1125.1 538.3L1122.5 532.6L1119.5 527.1L1115.9 521.8L1111.8 516.6L1107.3 511.6L1102.3 506.8L1096.9 502.2L1091.1 497.8L1084.0 493.2L1077.5 489.4L1070.7 485.9L1063.5 482.8L1056.1 479.9L1048.4 477.3L1040.6 475.1L1032.5 473.3L1024.3 471.8L1015.9 470.6L1007.5 469.8L999.0 469.4L990.5 469.3L982.0 469.6L973.5 470.3L965.1 471.3L956.8 472.7L948.7 474.5L940.8 476.6L933.0 479.0L925.5 481.8L918.3 484.8L911.3 488.2L904.7 491.9L897.5 496.5L891.6 500.7L886.0 505.2L880.9 509.9L876.2 514.9L872.0 520.0L868.3 525.3L865.0 530.8L862.3 536.4L860.1 542.1L857.9 549.3L856.7 555.1L856.1 561.0L856.0 566.9L856.5 572.8L857.5 578.7L859.4 585.9L861.5 591.6L864.0 597.3L867.1 602.8L870.7 608.1L874.8 613.3L879.3 618.3L884.3 623.1L889.7 627.7L896.4 632.7L902.6 636.7L909.1 640.5L915.9 644.0L923.1 647.1L930.5 650.0L938.2 652.6L946.0 654.8L954.1 656.6L962.3 658.1L970.7 659.3L979.1 660.1L987.6 660.5L996.1 660.6L1004.6 660.3L1013.1 659.6L1021.5 658.6L1029.8 657.2L1037.9 655.4L1045.8 653.3L1053.6 650.9L1061.1 648.1L1068.3 645.1L1075.3 641.7L1081.9 638.0L1088.2 634.0L1095.0 629.2L1100.6 624.7L1105.7 620.0L1110.4 615.0L1114.6 609.9L1118.3 604.6L1121.6 599.1L1124.3 593.5L1126.5 587.8zM862.6 559.3L863.7 553.7L865.4 548.1L867.5 542.6L870.1 537.3L873.2 532.1L876.8 526.9L880.9 522.0L885.4 517.3L890.3 512.7L895.6 508.4L901.3 504.3L907.4 500.5L913.9 496.9L920.6 493.6L927.6 490.7L934.9 488.0L942.4 485.6L950.1 483.6L958.0 481.9L966.0 480.6L974.1 479.5L982.3 478.9L990.5 478.6L998.8 478.7L1007.0 479.1L1015.2 479.8L1023.3 481.0L1031.3 482.4L1039.1 484.2L1046.7 486.4L1054.2 488.8L1061.4 491.6L1068.3 494.7L1074.9 498.1L1081.2 501.7L1087.2 505.6L1092.8 509.8L1098.0 514.2L1102.8 518.8L1107.1 523.7L1111.0 528.6L1114.4 533.8L1117.4 539.1L1119.9 544.5L1121.8 550.0L1123.3 555.6L1124.3 561.2L1124.6 565.3L1124.0 570.6L1122.9 576.2L1121.2 581.8L1119.1 587.2L1116.5 592.6L1113.3 597.9L1109.8 602.9L1105.7 607.9L1101.2 612.6L1096.3 617.2L1091.0 621.5L1085.3 625.6L1079.2 629.4L1072.7 633.0L1066.0 636.3L1059.0 639.3L1051.7 641.9L1044.2 644.3L1036.5 646.3L1028.6 648.0L1020.6 649.4L1012.5 650.4L1004.3 651.0L996.1 651.3L987.8 651.2L979.6 650.8L971.4 650.1L963.3 648.9L955.3 647.5L947.5 645.7L939.9 643.5L932.4 641.1L925.2 638.3L918.3 635.2L911.7 631.8L905.4 628.2L899.4 624.3L893.8 620.1L888.6 615.7L883.8 611.1L879.5 606.3L875.6 601.3L872.1 596.1L869.2 590.8L866.7 585.4L864.8 579.9L863.3 574.4L862.3 568.8L862.0 564.7z" fill="#0b0b0b"/><path d="M880.9 512.2L876.3 517.1L872.0 522.2L868.3 527.5L865.0 533.0L862.3 538.6L860.1 544.3L858.4 550.1L857.2 555.9L856.6 561.8L856.5 567.7L856.9 573.6L857.9 579.4L859.5 585.2L861.5 591.0L864.1 596.6L867.2 602.1L870.7 607.4L874.8 612.6L879.3 617.7L884.3 622.5L889.7 627.0L895.5 631.4L901.7 635.5L908.3 639.3L915.2 642.8L922.4 646.0L929.9 648.9L937.6 651.5L945.6 653.7L953.7 655.6L962.1 657.1L970.5 658.3L979.0 659.1L987.6 659.5L996.2 659.5L1004.8 659.2L1013.3 658.6" fill="none" stroke="#2a2a2a" stroke-width="0.6"/><path d="M938.6 634.4L935.9 651.0L938.6 659.4" fill="none" stroke="#062406" stroke-width="0.7"/><path d="M1093.3 547.2L1093.3 558.3L1093.4 557.2L1093.7 552.7L1093.5 548.2z" fill="#062906"/><path d="M1092.6 562.2L1093.4 557.2L1093.7 552.7L1093.5 548.2L1092.6 542.9z" fill="#063006"/><path d="M1093.0 545.1L1092.8 543.7L1091.6 538.7L1091.6 564.2L1091.9 565.4L1092.8 561.7L1093.0 559.8z" fill="#073707"/><path d="M1092.0 540.1L1090.2 534.6L1090.1 559.8L1091.9 565.0z" fill="#073f07"/><path d="M1090.5 535.5L1088.2 530.2L1088.2 555.5L1090.5 560.7z" fill="#074607"/><path d="M1088.6 531.0L1085.9 526.0L1085.9 551.3L1088.6 556.2z" fill="#084e08"/><path d="M1086.3 526.7L1083.2 522.0L1083.2 547.2L1086.3 551.9z" fill="#085508"/><path d="M1083.6 522.5L1080.1 518.0L1080.1 543.2L1083.6 547.7z" fill="#085d08"/><path d="M1080.5 518.5L1076.7 514.2L1076.7 539.4L1080.5 543.7z" fill="#096409"/><path d="M1077.1 514.6L1072.9 510.6L1072.9 535.7L1077.1 539.8z" fill="#096c09"/><path d="M1073.3 510.9L1068.7 507.1L1068.7 532.3L1073.3 536.1z" fill="#097309"/><path d="M1069.1 507.4L1064.2 503.8L1064.2 529.0L1069.1 532.6z" fill="#0a7a0a"/><path d="M1054.4 523.0L1059.6 526.0L1064.6 529.2L1064.6 504.1L1059.7 500.9L1054.4 497.9z" fill="#0a820a"/><path d="M1054.8 498.1L1049.1 495.3L1049.1 520.4L1054.8 523.2z" fill="#0a890a"/><path d="M1037.7 515.9L1043.6 518.1L1049.5 520.6L1049.5 495.5L1043.7 493.0L1037.7 490.8z" fill="#0b910b"/><path d="M1025.6 512.4L1031.9 514.1L1038.1 516.0L1038.1 490.9L1031.9 489.0L1025.6 487.3z" fill="#0b980b"/><path d="M961.1 512.4L967.6 511.1L974.0 510.1L980.5 509.3L987.0 508.9L993.6 508.8L1000.1 508.9L1006.6 509.4L1013.1 510.1L1019.5 511.2L1026.0 512.5L1026.0 487.4L1019.5 486.1L1013.1 485.0L1006.7 484.3L1000.1 483.8L993.6 483.7L987.0 483.8L980.5 484.2L974.0 485.0L967.6 486.0L961.1 487.3z" fill="#0ca00c"/><path d="M949.0 515.9L955.2 513.9L961.5 512.3L961.5 487.2L955.1 488.8L949.0 490.8z" fill="#0b980b"/><path d="M937.6 520.4L943.4 517.9L949.4 515.7L949.4 490.6L943.4 492.8L937.6 495.3z" fill="#0b910b"/><path d="M927.1 525.9L932.5 522.9L938.0 520.2L938.0 495.1L932.4 497.8L927.1 500.8z" fill="#0a890a"/><path d="M927.5 500.5L922.3 503.9L922.3 529.0L927.5 525.7z" fill="#0a820a"/><path d="M922.7 503.6L917.8 507.2L917.8 532.3L922.7 528.7z" fill="#0a7a0a"/><path d="M918.2 506.8L913.6 510.7L913.6 535.8L918.2 532.0z" fill="#097309"/><path d="M914.0 510.3L909.8 514.3L909.8 539.5L914.0 535.5z" fill="#096c09"/><path d="M910.2 513.9L906.3 518.2L906.3 543.4L910.2 539.1z" fill="#096409"/><path d="M906.7 517.7L903.2 522.2L903.2 547.4L906.7 542.9z" fill="#085d08"/><path d="M903.6 521.6L900.5 526.4L900.5 551.6L903.6 546.9z" fill="#085508"/><path d="M900.9 525.7L898.2 530.7L898.2 555.9L900.9 551.0z" fill="#084e08"/><path d="M898.6 529.8L896.2 535.1L896.2 560.4L898.6 555.2z" fill="#074607"/><path d="M896.6 534.1L894.7 539.7L894.7 564.8L896.6 559.5z" fill="#073f07"/><path d="M895.1 538.3L893.8 543.3L893.6 544.7L893.6 560.4L894.7 565.4L895.1 563.8z" fill="#073707"/><path d="M894.0 542.5L893.2 547.8L893.0 551.7L893.1 556.8L893.8 561.3L894.0 562.4z" fill="#063006"/><path d="M893.4 546.8L893.2 547.8L892.9 552.3L893.1 556.8L893.4 558.5z" fill="#062906"/><path d="M922.5 503.7L918.0 507.0L913.8 510.5L910.0 514.1L906.5 517.9L903.4 521.9L900.7 526.0L898.4 530.2L896.4 534.5L894.9 538.9L893.8 543.3L893.2 547.8L892.9 552.3L893.1 556.8L893.8 561.3L894.6 565.0L894.9 563.8L896.4 559.4L898.4 555.1L900.7 550.9L903.4 546.8L906.5 542.8L910.0 539.0L913.8 535.4L918.0 531.9L922.5 528.6L927.3 525.5L932.4 522.7L937.8 520.1L943.4 517.7L949.2 515.6L955.1 513.8L961.3 512.2L967.6 510.9L974.0 509.9L980.5 509.1L987.0 508.7L993.6 508.6L1000.1 508.7L1006.7 509.2L1013.1 509.9L1019.5 511.0L1025.8 512.3L1031.9 513.9L1037.9 515.8L1043.7 517.9L1049.3 520.3L1054.6 522.9L1059.7 525.8L1064.4 528.9L1068.9 532.2L1073.1 535.7L1076.9 539.3L1080.3 543.2L1083.4 547.1L1086.1 551.2L1088.4 555.5L1090.3 559.8L1092.0 564.9L1092.8 561.7L1093.4 557.2L1093.7 552.7L1093.5 548.2L1092.8 543.7L1091.8 539.3L1090.3 534.9L1088.4 530.5L1086.1 526.3L1083.4 522.2L1080.3 518.2L1076.9 514.4L1073.1 510.7L1068.9 507.3L1064.4 504.0L1059.7 500.9L1054.6 498.0L1049.3 495.4L1043.7 493.0L1037.9 490.9L1031.9 489.0L1025.8 487.4L1019.5 486.1L1013.1 485.0L1006.7 484.3L1000.1 483.8L993.6 483.7L987.0 483.8L980.5 484.2L974.0 485.0L967.6 486.0L961.3 487.3L955.1 488.8L949.2 490.7L943.4 492.8L937.8 495.2L932.4 497.8L927.3 500.6z" fill="none" stroke="#062406" stroke-width="0.7" stroke-linejoin="round"/><path d="M1093.2 558.7L1092.8 556.1M1092.8 556.1L1091.8 551.7M1091.8 551.7L1090.3 547.3M1090.3 547.3L1088.4 543.0M1088.4 543.0L1086.1 538.8M1086.1 538.8L1083.4 534.7M1083.4 534.7L1080.3 530.7M1080.3 530.7L1076.9 526.9M1076.9 526.9L1073.1 523.2M1073.1 523.2L1068.9 519.7M1068.9 519.7L1064.4 516.4M1064.4 516.4L1059.7 513.3M1059.7 513.3L1054.6 510.5M1054.6 510.5L1049.3 507.8M1049.3 507.8L1043.7 505.4M1043.7 505.4L1037.9 503.3M1037.9 503.3L1031.9 501.4M1031.9 501.4L1025.8 499.8M1025.8 499.8L1019.5 498.5M1019.5 498.5L1013.1 497.5M1013.1 497.5L1006.7 496.7M1006.7 496.7L1000.1 496.3M1000.1 496.3L993.6 496.1M993.6 496.1L987.0 496.3M987.0 496.3L980.5 496.7M980.5 496.7L974.0 497.4M974.0 497.4L967.6 498.4M967.6 498.4L961.3 499.7M961.3 499.7L955.1 501.3M955.1 501.3L949.2 503.1M949.2 503.1L943.4 505.3M943.4 505.3L937.8 507.6M937.8 507.6L932.4 510.2M932.4 510.2L927.3 513.1M927.3 513.1L922.5 516.2M922.5 516.2L918.0 519.4M918.0 519.4L913.8 522.9M913.8 522.9L910.0 526.6M910.0 526.6L906.5 530.4M906.5 530.4L903.4 534.4M903.4 534.4L900.7 538.4M900.7 538.4L898.4 542.7M898.4 542.7L896.4 547.0M896.4 547.0L894.9 551.3M894.9 551.3L893.8 555.8M893.8 555.8L893.4 558.7" fill="none" stroke="#062406" stroke-width="0.6"/><path d="M1037.7 540.3L1037.7 524.3L1030.0 519.5L1030.0 535.5z" fill="#0a820a"/><path d="M1043.7 545.6L1043.7 529.5L1037.3 524.0L1037.3 540.1z" fill="#097309"/><path d="M1048.4 551.6L1048.4 535.4L1043.3 529.1L1043.3 545.3z" fill="#085d08"/><path d="M1051.7 558.2L1051.7 541.8L1048.0 534.6L1048.0 551.0z" fill="#084e08"/><path d="M1086.6 541.6L1086.6 527.3L1085.9 526.0L1051.3 541.7L1051.3 557.7z" fill="#0b910b"/><path d="M1048.2 551.0L1051.5 557.4L1086.4 541.5L1086.4 526.9L1086.1 526.3L1086.0 526.1L1051.5 541.8L1048.2 535.4L1043.5 529.6L1037.5 524.4L1030.2 519.8L1030.2 535.4L1037.5 540.0L1043.5 545.2z" fill="none" stroke="#062406" stroke-width="0.7" stroke-linejoin="round"/><path d="M1030.2 533.4L1037.5 538.0M1037.5 538.0L1043.5 543.2M1043.5 543.2L1048.2 549.0M1048.2 549.0L1051.5 555.4M1051.5 555.4L1086.4 539.5" fill="none" stroke="#062406" stroke-width="0.6"/><path d="M933.8 562.8L933.8 546.8L896.6 534.1L895.8 536.3L895.8 549.8z" fill="#0b980b"/><path d="M936.0 555.9L935.9 539.3L933.4 546.9L933.4 563.5z" fill="#073f07"/><path d="M939.5 549.7L939.5 533.4L935.6 540.2L935.6 556.6z" fill="#084e08"/><path d="M944.5 544.1L944.5 527.9L939.1 534.1L939.1 550.2z" fill="#096409"/><path d="M951.0 538.9L951.0 522.8L944.1 528.4L944.1 544.4z" fill="#097309"/><path d="M944.3 528.5L939.3 534.1L935.8 540.3L933.6 546.9L896.5 534.3L896.0 535.7L896.0 549.7L933.6 562.5L935.8 555.8L939.3 549.7L944.3 544.0L950.8 538.8L950.8 523.3z" fill="none" stroke="#062406" stroke-width="0.7" stroke-linejoin="round"/><path d="M896.0 547.7L933.6 560.5M933.6 560.5L935.8 553.9M935.8 553.9L939.3 547.7M939.3 547.7L944.3 542.0M944.3 542.0L950.8 536.8" fill="none" stroke="#062406" stroke-width="0.6"/><path d="M1033.4 608.9L1033.4 583.6L1026.7 587.1L1026.7 612.4z" fill="#0a890a"/><path d="M1036.3 607.1L1036.3 581.7L1033.0 583.8L1033.0 609.2z" fill="#0a820a"/><path d="M1039.1 605.1L1039.1 579.7L1035.9 581.9L1035.9 607.3z" fill="#0a7a0a"/><path d="M1041.6 603.0L1041.6 577.5L1038.7 580.0L1038.7 605.4z" fill="#097309"/><path d="M1043.9 600.7L1043.9 575.3L1041.2 577.9L1041.2 603.3z" fill="#096c09"/><path d="M1046.0 598.4L1046.0 572.9L1043.5 575.7L1043.5 601.2z" fill="#096409"/><path d="M1047.9 596.0L1047.9 570.4L1045.6 573.4L1045.6 598.9z" fill="#085d08"/><path d="M1049.6 593.5L1049.6 567.9L1047.5 571.0L1047.5 596.6z" fill="#085508"/><path d="M1051.0 591.0L1051.0 565.2L1049.2 568.5L1049.2 594.2z" fill="#084e08"/><path d="M1052.1 588.3L1052.1 562.5L1050.6 566.0L1050.6 591.8z" fill="#074607"/><path d="M1053.1 585.7L1053.0 559.7L1051.7 563.4L1051.7 589.3z" fill="#073f07"/><path d="M1052.8 586.6L1053.7 583.0L1053.7 557.1L1053.6 557.0L1052.7 560.7L1052.7 586.6z" fill="#073707"/><path d="M1053.6 584.0L1054.1 580.3L1054.1 554.3L1053.9 554.3L1053.3 558.0L1053.3 583.9z" fill="#063006"/><path d="M932.9 581.0L932.9 555.1L932.7 551.4L932.3 551.4L932.3 577.3L932.5 581.0zM1054.3 577.5L1054.3 551.6L1053.9 551.6L1053.7 555.3L1053.7 581.2L1054.1 581.2z" fill="#062906"/><path d="M933.0 583.7L933.2 583.7L933.2 557.8L932.7 554.1L932.5 554.1L932.5 580.0z" fill="#063006"/><path d="M933.7 586.4L933.9 586.4L933.9 560.5L933.0 556.8L932.8 556.8L932.8 582.8z" fill="#073707"/><path d="M934.8 589.1L934.8 563.1L933.6 559.5L933.5 585.5z" fill="#073f07"/><path d="M935.9 591.7L935.9 565.7L934.4 562.2L934.4 588.1z" fill="#074607"/><path d="M937.3 594.0L937.3 568.3L935.5 565.0L935.5 590.7z" fill="#084e08"/><path d="M938.9 596.4L938.9 570.8L936.9 567.7L936.9 593.3z" fill="#085508"/><path d="M940.8 598.7L940.8 573.2L938.5 570.2L938.5 595.8z" fill="#085d08"/><path d="M942.9 601.0L942.9 575.5L940.4 572.7L940.4 598.2z" fill="#096409"/><path d="M945.2 603.2L945.2 577.7L942.5 575.1L942.5 600.6z" fill="#096c09"/><path d="M947.7 605.2L947.7 579.8L944.8 577.4L944.8 602.8z" fill="#097309"/><path d="M950.4 607.2L950.4 581.8L947.3 579.5L947.3 604.9z" fill="#0a7a0a"/><path d="M956.4 610.7L956.4 585.4L950.0 581.5L950.0 606.9z" fill="#0a820a"/><path d="M959.6 612.3L959.6 587.0L956.0 585.2L956.0 610.5z" fill="#0a890a"/><path d="M966.5 615.0L966.5 589.7L959.2 586.8L959.2 612.1z" fill="#0b910b"/><path d="M973.8 617.1L973.8 591.8L966.1 589.6L966.1 614.9z" fill="#0b980b"/><path d="M989.0 619.2L996.9 619.2L1004.8 618.5L1012.9 617.1L1012.9 591.7L1005.0 593.2L997.1 593.9L993.1 594.0L989.2 593.9L981.3 593.1L973.4 591.7L973.4 617.0L981.1 618.4z" fill="#0ca00c"/><path d="M1020.2 615.0L1020.2 589.6L1012.5 591.8L1012.5 617.2z" fill="#0b980b"/><path d="M1027.1 612.2L1027.1 586.9L1019.8 589.8L1019.8 615.1z" fill="#0b910b"/><path d="M937.1 593.3L938.7 595.7L940.6 598.1L942.7 600.5L945.0 602.7L947.5 604.8L950.2 606.8L953.1 608.7L956.2 610.4L959.4 612.0L962.8 613.4L966.3 614.7L969.9 615.9L973.6 616.8L977.4 617.6L981.3 618.3L985.2 618.7L989.2 619.0L993.1 619.1L997.1 619.0L1001.1 618.7L1005.0 618.3L1008.9 617.7L1012.7 616.9L1016.4 615.9L1020.0 614.8L1023.5 613.5L1026.9 612.1L1030.2 610.5L1033.2 608.8L1036.1 606.9L1038.9 605.0L1041.4 602.9L1043.7 600.6L1045.8 598.3L1047.7 595.9L1049.4 593.5L1050.8 590.9L1051.9 588.3L1052.9 585.6L1053.5 583.0L1053.9 580.2L1054.1 577.5L1054.1 552.6L1053.9 555.3L1053.5 558.0L1052.9 560.7L1051.9 563.4L1050.8 566.0L1049.4 568.5L1047.7 571.0L1045.8 573.4L1043.7 575.7L1041.4 578.0L1038.9 580.1L1036.1 582.0L1033.2 583.9L1030.2 585.6L1026.9 587.2L1023.5 588.6L1020.0 589.9L1016.4 591.0L1012.7 592.0L1008.9 592.8L1005.0 593.4L1001.1 593.8L997.1 594.1L993.1 594.2L989.2 594.1L985.2 593.8L981.3 593.3L977.4 592.7L973.6 591.9L969.9 591.0L966.3 589.8L962.8 588.5L959.4 587.1L956.2 585.5L953.1 583.8L950.2 581.9L947.5 579.9L945.0 577.8L942.7 575.6L940.6 573.2L938.7 570.8L937.1 568.3L935.7 565.8L934.6 563.2L933.7 560.5L933.0 557.8L932.7 555.1L932.5 552.4L932.5 577.3L932.7 580.0L933.0 582.7L933.7 585.4L934.6 588.1L935.7 590.7z" fill="none" stroke="#062406" stroke-width="0.7" stroke-linejoin="round"/><path d="M1026.9 599.7L1030.2 598.1M1030.2 598.1L1033.2 596.4M1033.2 596.4L1036.1 594.5M1036.1 594.5L1038.9 592.5M1038.9 592.5L1041.4 590.4M1041.4 590.4L1043.7 588.2M1043.7 588.2L1045.8 585.9M1045.8 585.9L1047.7 583.5M1047.7 583.5L1049.4 581.0M1049.4 581.0L1050.8 578.5M1050.8 578.5L1051.9 575.8M1051.9 575.8L1052.9 573.2M1052.9 573.2L1053.5 570.5M1053.5 570.5L1053.9 567.8M1053.9 567.8L1054.1 565.1M932.5 564.8L932.7 567.6M932.7 567.6L933.0 570.3M933.0 570.3L933.7 573.0M933.7 573.0L934.6 575.6M934.6 575.6L935.7 578.2M935.7 578.2L937.1 580.8M937.1 580.8L938.7 583.3M938.7 583.3L940.6 585.7M940.6 585.7L942.7 588.0M942.7 588.0L945.0 590.2M945.0 590.2L947.5 592.3M947.5 592.3L950.2 594.3M950.2 594.3L953.1 596.2M953.1 596.2L956.2 597.9M956.2 597.9L959.4 599.5M959.4 599.5L962.8 601.0M962.8 601.0L966.3 602.3M966.3 602.3L969.9 603.4M969.9 603.4L973.6 604.4M973.6 604.4L977.4 605.2M977.4 605.2L981.3 605.8M981.3 605.8L985.2 606.3M985.2 606.3L989.2 606.5M989.2 606.5L993.1 606.6M993.1 606.6L997.1 606.5M997.1 606.5L1001.1 606.3M1001.1 606.3L1005.0 605.8M1005.0 605.8L1008.9 605.2M1008.9 605.2L1012.7 604.4M1012.7 604.4L1016.4 603.5M1016.4 603.5L1020.0 602.4M1020.0 602.4L1023.5 601.1M1023.5 601.1L1026.9 599.7" fill="none" stroke="#062406" stroke-width="0.6"/><path d="M980.7 620.8L983.2 620.9L979.3 591.7L979.1 591.7L979.1 608.2z" fill="#063006"/><path d="M979.3 608.2L980.9 620.8L983.0 620.9L979.3 592.7z" fill="none" stroke="#062406" stroke-width="0.7" stroke-linejoin="round"/><path d="M979.3 606.2L981.2 620.8" fill="none" stroke="#062406" stroke-width="0.6"/><path d="M1035.2 637.9L1027.0 639.6L1018.6 640.9L1010.1 641.9L1001.6 642.4L993.0 642.6L984.4 642.4L975.8 641.8L967.3 640.8L959.0 639.5L950.7 637.8L942.7 635.7L934.9 633.2L927.3 630.4L920.0 627.3L913.0 623.9L906.4 620.1L900.1 616.1L894.3 611.7L888.8 607.2L883.8 602.4L879.3 597.4L875.3 592.2L871.8 586.8L868.7 581.2L866.3 575.6L864.3 569.9L863.0 564.0L862.1 558.2L861.9 552.3L862.2 546.4L863.1 540.5L864.5 534.7L866.5 528.9L869.0 523.3L872.0 517.8L875.6 512.4L879.7 507.2L884.2 502.2L889.3 497.4L894.7 492.9L900.6 488.6L906.9 484.6L913.6 480.9L920.6 477.4L927.9 474.3L935.5 471.6L943.3 469.1L951.4 467.1L959.6 465.4L968.0 464.1L976.5 463.1L985.0 462.6L993.6 462.4L1002.2 462.6L1010.8 463.2L1019.3 464.2L1027.6 465.5L1035.9 467.2L1043.9 469.3L1051.7 471.8L1059.3 474.6L1066.6 477.7L1073.6 481.1L1080.2 484.9L1086.5 488.9L1092.3 493.3L1097.8 497.8L1102.8 502.6L1107.3 507.6L1111.3 512.8L1114.8 518.2L1117.9 523.8L1120.3 529.4L1122.3 535.1L1123.6 541.0L1124.5 546.8L1124.7 552.7L1124.4 558.6L1123.5 564.5L1122.1 570.3L1120.1 576.1L1117.6 581.7L1114.6 587.2L1111.0 592.6L1106.9 597.8L1102.4 602.8L1097.3 607.6L1091.9 612.1L1086.0 616.4L1079.7 620.4L1073.0 624.1L1066.0 627.6L1058.7 630.7L1051.1 633.4L1043.3 635.9zM1064.1 601.3L1068.6 598.0L1072.8 594.5L1076.6 590.9L1080.1 587.1L1083.2 583.1L1085.9 579.0L1088.2 574.8L1090.2 570.5L1091.7 566.1L1092.8 561.7L1093.4 557.2L1093.7 552.7L1093.5 548.2L1092.8 543.7L1091.8 539.3L1090.3 534.9L1088.4 530.5L1086.0 526.1L1052.0 541.6L1052.9 544.5L1053.6 547.2L1053.9 549.9L1054.1 552.6L1053.9 555.3L1053.5 558.0L1052.9 560.7L1051.9 563.4L1050.8 566.0L1049.4 568.5L1047.7 571.0L1045.8 573.4L1043.7 575.7L1041.4 578.0L1038.9 580.1L1036.1 582.0L1033.2 583.9L1030.2 585.6L1026.9 587.2L1023.5 588.6L1017.7 590.6L1021.4 618.5L1025.3 617.7L1031.5 616.2L1037.4 614.3L1043.2 612.2L1048.8 609.8L1054.2 607.2L1059.3 604.4zM979.3 593.0L973.6 591.9L969.9 591.0L966.3 589.8L962.8 588.5L959.4 587.1L956.2 585.5L953.1 583.8L950.2 581.9L947.5 579.9L945.0 577.8L942.7 575.6L940.6 573.2L938.7 570.8L937.1 568.3L935.7 565.8L934.6 563.2L933.7 560.5L933.0 557.8L932.7 555.1L932.5 552.4L932.7 549.7L933.1 546.8L896.5 534.3L894.9 538.9L893.8 543.3L893.2 547.8L892.9 552.3L893.1 556.8L893.8 561.3L894.8 565.7L896.3 570.1L898.2 574.5L900.5 578.7L903.2 582.8L906.3 586.8L909.7 590.6L913.5 594.3L917.7 597.7L922.2 601.0L926.9 604.1L932.0 607.0L937.3 609.6L942.9 612.0L948.7 614.1L954.7 616.0L960.8 617.6L967.1 618.9L973.5 620.0L979.9 620.7L983.0 620.9zM953.4 521.1L956.4 519.4L959.7 517.8L963.1 516.4L966.6 515.1L970.2 514.0L973.9 513.0L977.7 512.2L981.6 511.6L985.5 511.2L989.5 510.9L993.5 510.8L997.4 510.9L1001.4 511.2L1005.3 511.7L1009.2 512.3L1013.0 513.1L1016.7 514.0L1020.3 515.2L1023.8 516.5L1027.2 517.9L1030.6 519.6L1064.7 504.1L1059.7 500.9L1054.6 498.0L1049.3 495.4L1043.7 493.0L1037.9 490.9L1031.9 489.0L1025.8 487.4L1019.5 486.1L1013.1 485.0L1006.7 484.3L1000.1 483.8L993.6 483.7L987.0 483.8L980.5 484.2L974.0 485.0L967.6 486.0L961.3 487.3L955.1 488.8L949.2 490.7L943.4 492.8L937.8 495.2L932.4 497.8L927.3 500.6L922.5 503.7L918.0 507.0L913.7 510.6L950.3 523.1z" fill="#0dc40d" stroke="#062406" stroke-width="0.7" stroke-linejoin="round"/><path d="M1005.7 565.9L1008.5 564.4L1008.5 561.4L1005.7 562.8z" fill="#212121"/><path d="M1008.1 564.7L1010.6 563.0L1010.6 559.9L1008.1 561.6z" fill="#1e1e1e"/><path d="M1010.2 563.3L1012.5 561.3L1012.5 558.2L1010.2 560.2z" fill="#1c1c1c"/><path d="M1012.1 561.8L1014.0 559.5L1014.0 556.3L1012.1 558.6z" fill="#181818"/><path d="M1013.6 560.2L1015.1 557.6L1015.1 554.3L1013.6 556.8z" fill="#151515"/><path d="M1014.7 558.6L1015.9 555.6L1015.9 552.0L1014.7 554.9z" fill="#111111"/><path d="M1015.5 556.6L1015.7 556.6L1016.3 553.6L1016.3 550.0L1016.1 550.0L1015.5 553.0z" fill="#0c0c0c"/><path d="M1015.9 554.6L1016.3 554.6L1016.3 547.9L1015.9 547.9z" fill="#080808"/><path d="M970.3 553.5L970.9 556.5L971.1 556.5L971.1 552.9L970.5 549.9L970.3 549.9z" fill="#0c0c0c"/><path d="M970.7 555.6L971.8 558.5L971.8 554.9L970.7 551.9z" fill="#0f0f0f"/><path d="M971.4 557.6L973.0 560.1L973.0 556.7L971.4 554.2z" fill="#151515"/><path d="M972.6 559.5L974.5 561.7L974.5 558.5L972.6 556.2z" fill="#181818"/><path d="M974.1 561.3L976.3 563.3L976.3 560.1L974.1 558.1z" fill="#1c1c1c"/><path d="M975.9 562.9L978.4 564.6L978.4 561.5L975.9 559.8z" fill="#1e1e1e"/><path d="M978.0 564.4L980.8 565.8L980.8 562.8L978.0 561.3z" fill="#212121"/><path d="M980.4 565.6L983.3 566.8L983.3 563.8L980.4 562.6z" fill="#232323"/><path d="M982.9 566.7L986.1 567.6L986.1 564.6L982.9 563.7z" fill="#252525"/><path d="M989.0 568.1L991.9 568.4L994.9 568.3L997.5 568.1L1000.8 567.5L1000.8 564.5L997.7 565.1L994.7 565.3L991.8 565.3L988.8 565.1L985.7 564.5L985.7 567.5z" fill="#272727"/><path d="M1000.4 567.6L1003.6 566.7L1003.6 563.7L1000.4 564.6z" fill="#252525"/><path d="M1003.2 566.9L1006.1 565.7L1006.1 562.7L1003.2 563.8z" fill="#232323"/><path d="M974.3 561.2L976.1 562.8L978.2 564.3L980.6 565.5L983.1 566.5L985.9 567.3L988.8 567.9L991.7 568.1L994.7 568.1L997.7 567.9L1000.6 567.4L1003.4 566.6L1005.9 565.6L1008.3 564.3L1010.4 562.9L1012.3 561.2L1013.8 559.5L1014.9 557.6L1015.7 555.6L1016.1 553.6L1016.1 548.9L1016.1 551.0L1015.7 553.0L1014.9 555.0L1013.8 556.9L1012.3 558.6L1010.4 560.3L1008.3 561.7L1005.9 562.9L1003.4 564.0L1000.6 564.7L997.7 565.3L994.7 565.5L991.7 565.5L988.8 565.3L985.9 564.7L983.1 563.9L980.6 562.9L978.2 561.6L976.1 560.2L974.3 558.6L972.8 556.8L971.6 554.9L970.9 552.9L970.5 550.9L970.5 553.5L970.9 555.5L971.6 557.5L972.8 559.4z" fill="none" stroke="#151515" stroke-width="0.7" stroke-linejoin="round"/><path d="M1005.9 562.9L1008.3 561.7L1010.4 560.3L1012.3 558.6L1013.8 556.9L1014.9 555.0L1015.7 553.0L1016.1 551.0L1016.1 548.9L1015.7 546.9L1015.0 544.9L1013.8 543.0L1012.3 541.2L1010.5 539.6L1008.4 538.1L1006.0 536.9L1003.5 535.9L1000.7 535.1L997.8 534.5L994.9 534.3L991.9 534.3L988.9 534.5L986.0 535.0L983.2 535.8L980.7 536.8L978.3 538.1L976.2 539.5L974.3 541.2L972.8 542.9L971.7 544.8L970.9 546.8L970.5 548.8L970.5 550.9L970.9 552.9L971.6 554.9L972.8 556.8L974.3 558.6L976.1 560.2L978.2 561.6L980.6 562.9L983.1 563.9L985.9 564.7L988.8 565.3L991.7 565.5L994.7 565.5L997.7 565.3L1000.6 564.7L1003.4 564.0z" fill="#343434" stroke="#151515" stroke-width="0.7" stroke-linejoin="round"/><path d="M1002.6 557.2L1003.9 556.3L1005.0 555.3L1005.9 554.2L1006.6 553.0L1007.1 551.8L1007.4 550.6L1007.4 549.3L1007.1 548.0L1006.7 546.8L1006.0 545.6L1005.1 544.5L1003.9 543.5L1002.6 542.6L1001.2 541.9L999.6 541.2L997.9 540.7L996.1 540.4L994.3 540.2L992.4 540.2L990.6 540.4L988.8 540.7L987.1 541.2L985.5 541.8L984.0 542.6L982.7 543.5L981.6 544.5L980.7 545.6L980.0 546.8L979.5 548.0L979.2 549.2L979.2 550.5L979.5 551.8L979.9 553.0L980.6 554.2L981.5 555.2L982.7 556.3L984.0 557.2L985.4 557.9L987.0 558.6L988.7 559.0L990.5 559.4L992.3 559.5L994.2 559.6L996.0 559.4L997.8 559.1L999.5 558.6L1001.1 558.0z" fill="#1f1f1f" stroke="#151515" stroke-width="0.7" stroke-linejoin="round"/><path d="M1006.9 552.3L1007.4 550.6L1007.4 549.3L1006.9 547.5z" fill="#0c0c0c"/><path d="M1007.3 549.1L1007.1 548.0L1006.5 546.5L1006.5 553.3L1007.1 551.8L1007.3 550.7z" fill="#0f0f0f"/><path d="M1006.9 547.3L1006.7 546.8L1005.8 545.4L1005.8 554.4L1006.6 553.0L1006.9 552.5z" fill="#151515"/><path d="M1006.2 546.0L1004.9 544.4L1004.9 554.1L1005.4 554.8L1006.2 553.8z" fill="#181818"/><path d="M1005.3 544.8L1003.7 543.4L1003.7 553.1L1005.3 554.5z" fill="#1c1c1c"/><path d="M1004.1 543.7L1002.4 542.5L1002.4 552.2L1004.1 553.4z" fill="#1e1e1e"/><path d="M1002.8 542.8L1001.0 541.8L1001.0 551.5L1002.8 552.5z" fill="#212121"/><path d="M1001.4 542.0L999.4 541.2L999.4 550.9L1001.4 551.7z" fill="#232323"/><path d="M999.8 541.3L997.7 540.7L997.7 550.4L999.8 551.0z" fill="#252525"/><path d="M988.6 550.5L990.6 550.1L994.3 549.9L998.1 550.5L998.1 540.8L996.1 540.4L994.3 540.2L992.4 540.2L990.6 540.4L988.6 540.8z" fill="#272727"/><path d="M989.0 540.7L986.9 541.3L986.9 551.0L989.0 550.4z" fill="#252525"/><path d="M987.3 541.1L985.3 541.9L985.3 551.6L987.3 550.8z" fill="#232323"/><path d="M985.7 541.8L983.8 542.7L983.8 552.4L985.7 551.5z" fill="#212121"/><path d="M984.2 542.5L982.5 543.7L982.5 553.4L984.2 552.2z" fill="#1e1e1e"/><path d="M982.9 543.4L981.4 544.7L981.4 554.4L982.9 553.1z" fill="#1c1c1c"/><path d="M981.8 544.3L980.5 545.9L980.5 553.9L981.2 554.8L981.8 554.1z" fill="#181818"/><path d="M980.9 545.4L980.0 546.8L979.8 547.3L979.8 552.5L980.9 554.4z" fill="#151515"/><path d="M980.2 546.4L979.5 548.0L979.3 549.0L979.3 550.8L979.5 551.8L980.2 553.4z" fill="#111111"/><path d="M979.7 547.5L979.2 549.2L979.2 550.5L979.7 552.3z" fill="#0c0c0c"/><path d="M979.4 548.2L979.2 549.2L979.2 550.5L979.4 551.6z" fill="#080808"/><path d="M987.1 541.2L985.5 541.8L984.0 542.6L982.7 543.5L981.6 544.5L980.7 545.6L980.0 546.8L979.5 548.0L979.2 549.2L979.2 550.5L979.5 551.8L979.9 553.0L981.0 554.6L982.7 553.0L984.0 552.1L985.5 551.3L987.1 550.7L988.8 550.2L990.6 549.9L992.4 549.7L994.3 549.7L996.1 549.9L997.9 550.2L999.6 550.7L1001.2 551.4L1002.6 552.1L1003.9 553.0L1005.6 554.6L1005.9 554.2L1006.6 553.0L1007.1 551.8L1007.4 550.6L1007.4 549.3L1007.1 548.0L1006.7 546.8L1006.0 545.6L1005.1 544.5L1003.9 543.5L1002.6 542.6L1001.2 541.9L999.6 541.2L997.9 540.7L996.1 540.4L994.3 540.2L992.4 540.2L990.6 540.4L988.8 540.7z" fill="none" stroke="#151515" stroke-width="0.7" stroke-linejoin="round"/><path d="M1003.5 556.5L1002.5 555.2L1001.4 554.3L1000.2 553.5L998.7 552.8L997.2 552.3L995.5 552.0L993.8 551.8L992.0 551.9L990.3 552.1L988.7 552.5L987.2 553.1L985.8 553.8L984.6 554.7L983.7 555.7L983.1 556.5L985.4 557.9L987.0 558.6L988.7 559.0L990.5 559.4L992.3 559.5L994.2 559.6L996.0 559.4L997.8 559.1L999.5 558.6L1001.1 558.0L1002.6 557.2z" fill="#383838" stroke="#151515" stroke-width="0.6" stroke-linejoin="round"/></svg><!--/Gv1-->
<div class="mtab" style="left:338.5px"><div class="txt" style="left:19px;top:1.5px;font-size:9.12px">Renacuajo-original-wheel-assembly : 1</div><svg class="x" width="9" height="9" viewBox="0 0 9 9"><path d="M1.6 1.6l5.8 5.8M7.4 1.6L1.6 7.4" stroke="#4a4a4a" stroke-width="2.1"/></svg></div><svg class="abs" style="left:343.0px;top:715.5px" width="10.120000000000001" height="9.200000000000001" viewBox="0 0 11 10"><path d="M.5 .3h5v2.200H2.900v1.600h1.700v2H2.900v2.800H.5z" fill="#e8300a"/><path d="M11.04 5.21L11.04 6.59L9.91 6.62L9.60 7.38L10.37 8.20L9.40 9.17L8.58 8.40L7.82 8.71L7.79 9.84L6.41 9.84L6.38 8.71L5.62 8.40L4.80 9.17L3.83 8.20L4.60 7.38L4.29 6.62L3.16 6.59L3.16 5.21L4.29 5.18L4.60 4.42L3.83 3.60L4.80 2.63L5.62 3.40L6.38 3.09L6.41 1.96L7.79 1.96L7.82 3.09L8.58 3.40L9.40 2.63L10.37 3.60L9.60 4.42L9.91 5.18zM8.10 5.90a1.0 1.0 0 1 0 -2.0 0a1.0 1.0 0 1 0 2.0 0z" fill="#14308a" fill-rule="evenodd"/></svg><div class="mtab" style="left:537px"><div class="txt" style="left:19px;top:1.5px;font-size:9.12px">Renacuajo-original-wheel-assembly : 2</div><svg class="x" width="9" height="9" viewBox="0 0 9 9"><path d="M1.6 1.6l5.8 5.8M7.4 1.6L1.6 7.4" stroke="#4a4a4a" stroke-width="2.1"/></svg></div><svg class="abs" style="left:541.5px;top:715.5px" width="10.120000000000001" height="9.200000000000001" viewBox="0 0 11 10"><path d="M.5 .3h5v2.200H2.900v1.600h1.700v2H2.900v2.800H.5z" fill="#e8300a"/><path d="M11.04 5.21L11.04 6.59L9.91 6.62L9.60 7.38L10.37 8.20L9.40 9.17L8.58 8.40L7.82 8.71L7.79 9.84L6.41 9.84L6.38 8.71L5.62 8.40L4.80 9.17L3.83 8.20L4.60 7.38L4.29 6.62L3.16 6.59L3.16 5.21L4.29 5.18L4.60 4.42L3.83 3.60L4.80 2.63L5.62 3.40L6.38 3.09L6.41 1.96L7.79 1.96L7.82 3.09L8.58 3.40L9.40 2.63L10.37 3.60L9.60 4.42L9.91 5.18zM8.10 5.90a1.0 1.0 0 1 0 -2.0 0a1.0 1.0 0 1 0 2.0 0z" fill="#14308a" fill-rule="evenodd"/></svg><div class="mtab sel" style="left:736px"><div class="txt" style="left:19px;top:1.5px;font-size:9.12px">Renacuajo-original-wheel-assembly : 3</div><svg class="x" width="9" height="9" viewBox="0 0 9 9"><path d="M1.6 1.6l5.8 5.8M7.4 1.6L1.6 7.4" stroke="#4a4a4a" stroke-width="2.1"/></svg></div><svg class="abs" style="left:740.5px;top:715.5px" width="10.120000000000001" height="9.200000000000001" viewBox="0 0 11 10"><path d="M.5 .3h5v2.200H2.900v1.600h1.700v2H2.900v2.800H.5z" fill="#e8300a"/><path d="M11.04 5.21L11.04 6.59L9.91 6.62L9.60 7.38L10.37 8.20L9.40 9.17L8.58 8.40L7.82 8.71L7.79 9.84L6.41 9.84L6.38 8.71L5.62 8.40L4.80 9.17L3.83 8.20L4.60 7.38L4.29 6.62L3.16 6.59L3.16 5.21L4.29 5.18L4.60 4.42L3.83 3.60L4.80 2.63L5.62 3.40L6.38 3.09L6.41 1.96L7.79 1.96L7.82 3.09L8.58 3.40L9.40 2.63L10.37 3.60L9.60 4.42L9.91 5.18zM8.10 5.90a1.0 1.0 0 1 0 -2.0 0a1.0 1.0 0 1 0 2.0 0z" fill="#14308a" fill-rule="evenodd"/></svg><div class="mtab" style="left:935.5px"><div class="txt" style="left:19px;top:1.5px;font-size:9.12px">Renacuajo-original-wheel-assembly : 4</div><svg class="x" width="9" height="9" viewBox="0 0 9 9"><path d="M1.6 1.6l5.8 5.8M7.4 1.6L1.6 7.4" stroke="#4a4a4a" stroke-width="2.1"/></svg></div><svg class="abs" style="left:940.0px;top:715.5px" width="10.120000000000001" height="9.200000000000001" viewBox="0 0 11 10"><path d="M.5 .3h5v2.200H2.900v1.600h1.700v2H2.900v2.800H.5z" fill="#e8300a"/><path d="M11.04 5.21L11.04 6.59L9.91 6.62L9.60 7.38L10.37 8.20L9.40 9.17L8.58 8.40L7.82 8.71L7.79 9.84L6.41 9.84L6.38 8.71L5.62 8.40L4.80 9.17L3.83 8.20L4.60 7.38L4.29 6.62L3.16 6.59L3.16 5.21L4.29 5.18L4.60 4.42L3.83 3.60L4.80 2.63L5.62 3.40L6.38 3.09L6.41 1.96L7.79 1.96L7.82 3.09L8.58 3.40L9.40 2.63L10.37 3.60L9.60 4.42L9.91 5.18zM8.10 5.90a1.0 1.0 0 1 0 -2.0 0a1.0 1.0 0 1 0 2.0 0z" fill="#14308a" fill-rule="evenodd"/></svg><div class="abs" style="left:40px;top:731px;width:1160px;height:1px;background:#fbfbfa"></div>
<!--AX--><svg class="abs" style="left:740px;top:350px;pointer-events:none" width="460" height="360" viewBox="740 350 460 360" font-family="Liberation Sans,sans-serif"><path d="M751.5 369.4L751.5 360.5" stroke="#2020a8" stroke-width="1.4" stroke-linecap="round"/><path d="M751.5 369.4L760.5 369.4" stroke="#b01818" stroke-width="1.4" stroke-linecap="round"/><text x="754.8" y="360.8" font-size="6.8" fill="#2a2a2a" text-anchor="middle">Z</text><text x="764.8" y="370.6" font-size="6.8" fill="#2a2a2a" text-anchor="middle">X</text><text x="755.3" y="370.5" font-size="6.8" fill="#2a2a2a" text-anchor="middle">Y</text><circle cx="751.5" cy="369.4" r="1" fill="#18a018"/><path d="M1182.7 370.3L1189.1 376.7" stroke="#b01818" stroke-width="1.4" stroke-linecap="round"/><path d="M1182.7 370.3L1189.6 367.1" stroke="#18a018" stroke-width="1.4" stroke-linecap="round"/><path d="M1182.7 370.3L1183.2 361.5" stroke="#2020a8" stroke-width="1.4" stroke-linecap="round"/><text x="1186" y="362" font-size="6.8" fill="#2a2a2a" text-anchor="middle">Z</text><text x="1192.9" y="367.4" font-size="6.8" fill="#2a2a2a" text-anchor="middle">Y</text><text x="1192.9" y="379.3" font-size="6.8" fill="#2a2a2a" text-anchor="middle">X</text><path d="M751.5 693.1L751.5 684.3" stroke="#18a018" stroke-width="1.4" stroke-linecap="round"/><path d="M751.5 693.1L760.3 693.1" stroke="#b01818" stroke-width="1.4" stroke-linecap="round"/><text x="755.2" y="683.2" font-size="6.8" fill="#2a2a2a" text-anchor="middle">Y</text><text x="755.2" y="692.6" font-size="6.8" fill="#2a2a2a" text-anchor="middle">Z</text><text x="764.8" y="693.3" font-size="6.8" fill="#2a2a2a" text-anchor="middle">X</text><circle cx="751.5" cy="693.1" r="1" fill="#2020a8"/><path d="M1182.7 693.2L1173.3 689.7" stroke="#18a018" stroke-width="1.4" stroke-linecap="round"/><path d="M1182.7 693.2L1177.3 700.4" stroke="#b01818" stroke-width="1.4" stroke-linecap="round"/><path d="M1182.7 693.2L1182.4 698.6" stroke="#2020a8" stroke-width="1.4" stroke-linecap="round"/><text x="1177" y="690" font-size="6.8" fill="#2a2a2a" text-anchor="middle">Y</text><text x="1186" y="700.4" font-size="6.8" fill="#2a2a2a" text-anchor="middle">Z</text><text x="1180.8" y="702.2" font-size="6.8" fill="#2a2a2a" text-anchor="middle">X</text></svg><!--/AX--></body></html>
